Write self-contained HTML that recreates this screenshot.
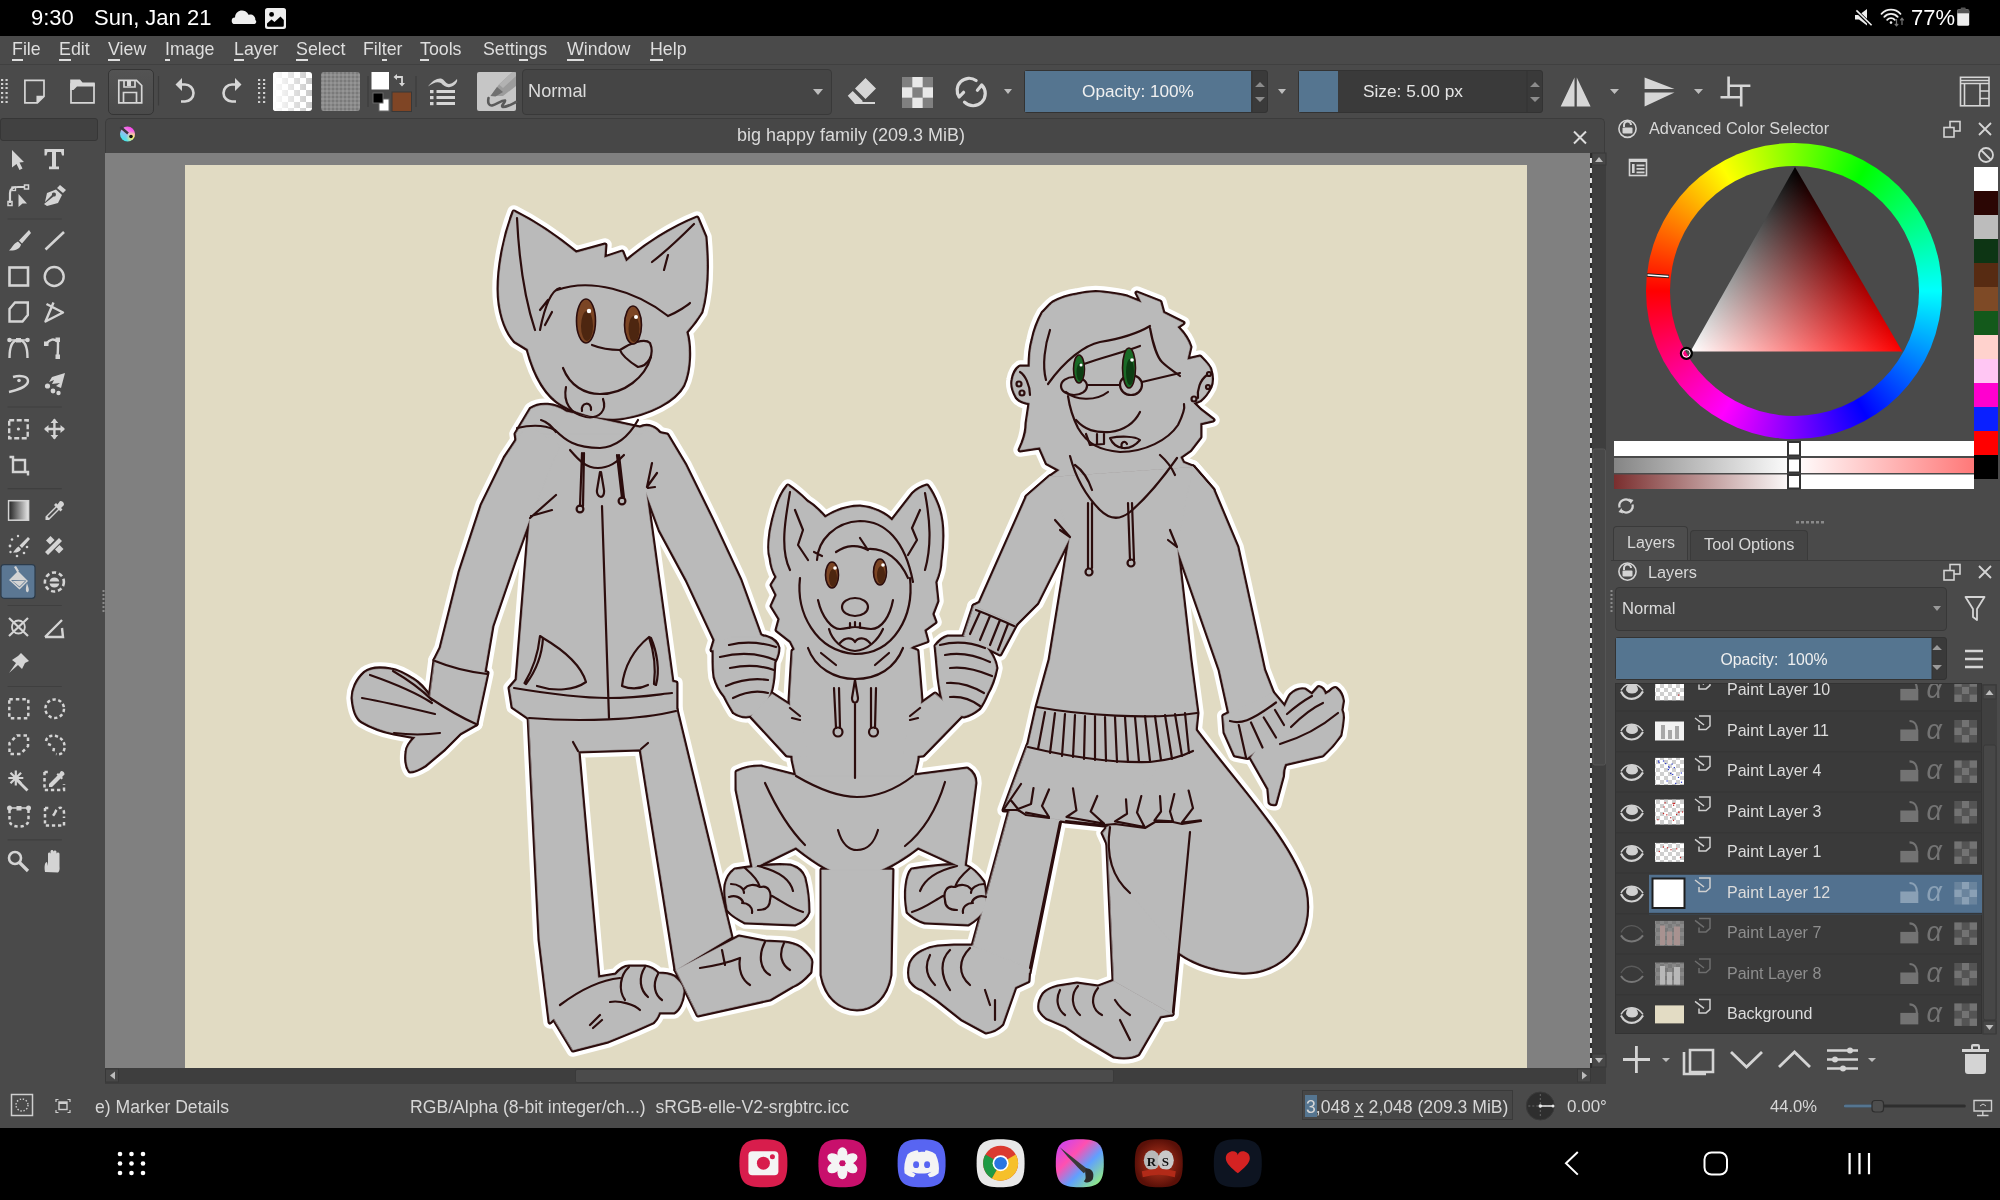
<!DOCTYPE html>
<html><head><meta charset="utf-8">
<style>
*{margin:0;padding:0;box-sizing:border-box}
html,body{width:2000px;height:1200px;overflow:hidden;background:#4a4a4a;font-family:"Liberation Sans",sans-serif;color:#d8d8d8}
.a{position:absolute}
#sb{left:0;top:0;width:2000px;height:36px;background:#000;color:#fff;font-size:22px}
#menu{left:0;top:36px;width:2000px;height:29px;background:#4a4a4a;font-size:17.8px;color:#dedede}
#menu span{position:absolute;top:3px}
#menu u{text-decoration:none;border-bottom:2px solid #dedede}
#tb{left:0;top:64px;width:2000px;height:54px;background:#4a4a4a;border-top:1px solid #404040}
#nav{left:0;top:1128px;width:2000px;height:72px;background:#000}
#status{left:0;top:1090px;width:2000px;height:38px;background:#4a4a4a;font-size:17.6px;color:#d6d6d6}
#canvasbg{left:105px;top:153px;width:1486px;height:915px;background:#808080}
#paper{left:185px;top:165px;width:1342px;height:903px;background:#e1dbc3}
#tab{left:105px;top:118px;width:1500px;height:36px;background:#474747;border:1px solid #3c3c3c;border-bottom:none;border-radius:5px 5px 0 0}
.field{background:#3d3d3d;border:1px solid #333;border-radius:4px}
.btn{background:linear-gradient(#535353,#4a4a4a);border:1px solid #353535;border-radius:5px}
.txt{white-space:nowrap}
</style></head><body>
<!-- android status bar -->
<div id="sb" class="a">
  <span class="a" style="left:31px;top:5px">9:30</span>
  <span class="a" style="left:94px;top:5px">Sun, Jan 21</span>
  <span class="a" style="left:1911px;top:5px">77%</span>
</div>
<!-- menu -->
<div id="menu" class="a">
  <span style="left:12px"><u>F</u>ile</span>
  <span style="left:59px"><u>E</u>dit</span>
  <span style="left:108px"><u>V</u>iew</span>
  <span style="left:165px"><u>I</u>mage</span>
  <span style="left:234px"><u>L</u>ayer</span>
  <span style="left:296px"><u>S</u>elect</span>
  <span style="left:363px">Fil<u>t</u>er</span>
  <span style="left:420px"><u>T</u>ools</span>
  <span style="left:483px">Setti<u>n</u>gs</span>
  <span style="left:567px"><u>W</u>indow</span>
  <span style="left:650px"><u>H</u>elp</span>
</div>
<!-- toolbar -->
<div id="tb" class="a"></div>
<div class="a btn" style="left:108px;top:69px;width:46px;height:46px"></div>
<div class="a field" style="left:522px;top:69px;width:310px;height:46px;background:#454545;border-color:#393939"></div>
<div class="a txt" style="left:528px;top:81px;font-size:18.2px;color:#dcdcdc">Normal</div>
<div class="a" style="left:1024px;top:70px;width:244px;height:43px;background:#3a3a3a;border:1px solid #333;border-radius:3px"></div>
<div class="a" style="left:1025px;top:71px;width:226px;height:41px;background:#557590"></div>
<div class="a txt" style="left:1025px;top:81px;width:226px;text-align:center;font-size:17.2px;color:#f0f0f0">Opacity: 100%</div>
<div class="a" style="left:1298px;top:70px;width:245px;height:43px;background:#3a3a3a;border:1px solid #333;border-radius:3px"></div>
<div class="a" style="left:1299px;top:71px;width:39px;height:41px;background:#557590"></div>
<div class="a txt" style="left:1363px;top:81px;font-size:17.3px;color:#e4e4e4">Size: 5.00 px</div>
<!-- left toolbox field -->
<div class="a" style="left:0;top:118px;width:98px;height:23px;background:#414141;border:1px solid #363636;border-radius:3px"></div>
<!-- canvas -->
<div id="tab" class="a"></div>
<div class="a txt" style="left:737px;top:125px;font-size:18px;color:#dadada">big happy family (209.3 MiB)</div>
<div id="canvasbg" class="a"></div>
<div id="paper" class="a"></div>
<!-- v scrollbar -->
<div class="a" style="left:1592px;top:153px;width:14px;height:915px;background:#3e3e3e"></div>
<!-- h scrollbar -->
<div class="a" style="left:105px;top:1068px;width:1501px;height:16px;background:#3e3e3e"></div>
<div class="a" style="left:575px;top:1069px;width:539px;height:14px;background:#4b4b4b;border:1px solid #3a3a3a;border-radius:2px"></div>

<!-- right panel : color selector -->
<div class="a txt" style="left:1649px;top:119px;font-size:16.3px;color:#d8d8d8">Advanced Color Selector</div>
<div class="a" style="left:1646.4px;top:143px;width:296px;height:296px;border-radius:50%;background:conic-gradient(from 270deg,#f00,#ff0,#0f0,#0ff,#00f,#f0f,#f00)"></div>
<div class="a" style="left:1669.8px;top:166.4px;width:249.2px;height:249.2px;border-radius:50%;background:#4a4a4a"></div>
<!-- tabs -->
<div class="a" style="left:1613px;top:526px;width:75px;height:35px;background:#4d4d4d;border:1px solid #3a3a3a;border-bottom:none;border-radius:4px 4px 0 0"></div>
<div class="a" style="left:1690px;top:530px;width:118px;height:31px;background:#444;border:1px solid #3a3a3a;border-bottom:none;border-radius:4px 4px 0 0"></div>
<div class="a txt" style="left:1627px;top:534px;font-size:16px;color:#d8d8d8">Layers</div>
<div class="a txt" style="left:1704px;top:535px;font-size:16.3px;color:#d8d8d8">Tool Options</div>
<div class="a" style="left:1611px;top:560px;width:389px;height:1px;background:#3a3a3a"></div>
<!-- layers docker -->
<div class="a txt" style="left:1648px;top:563px;font-size:16.3px;color:#d8d8d8">Layers</div>
<div class="a field" style="left:1615px;top:587px;width:332px;height:44px;background:#444;border-color:#383838"></div>
<div class="a txt" style="left:1622px;top:599px;font-size:16.6px;color:#dcdcdc">Normal</div>
<div class="a" style="left:1615px;top:637px;width:332px;height:43px;background:#3a3a3a;border:1px solid #333;border-radius:3px"></div>
<div class="a" style="left:1616px;top:638px;width:316px;height:41px;background:#557590"></div>
<div class="a txt" style="left:1616px;top:651px;width:316px;text-align:center;font-size:15.8px;color:#f0f0f0">Opacity:&nbsp; 100%</div>
<div class="a" style="left:1615px;top:683px;width:367px;height:351px;background:#3a3a3a;border:1px solid #333;overflow:hidden">
</div>
<div class="a" style="left:1982px;top:684px;width:15px;height:350px;background:#404040"></div>

<!-- status bar -->
<div id="status" class="a">
  <span class="a txt" style="left:95px;top:7px">e) Marker Details</span>
  <span class="a txt" style="left:410px;top:7px">RGB/Alpha (8-bit integer/ch...)&nbsp; sRGB-elle-V2-srgbtrc.icc</span>
  <div class="a" style="left:1302px;top:0px;width:211px;height:30px;border:1px solid #3a3a3a;background:#474747"></div>
  <div class="a" style="left:1305px;top:5px;width:11.6px;height:22px;background:#557590"></div>
  <span class="a txt" style="left:1306px;top:7px">3,048 x 2,048 (209.3 MiB)</span>
  <span class="a txt" style="left:1567px;top:7px;font-size:17px">0.00°</span>
  <span class="a txt" style="left:1770px;top:7px;font-size:16.6px">44.0%</span>
</div>
<div id="nav" class="a"></div>
<svg id="ov" class="a" style="left:0;top:0" width="2000" height="1200" viewBox="0 0 2000 1200">
<defs>
<clipPath id="pclip"><rect x="185" y="165" width="1342" height="903"/></clipPath>
<g id="c1">
<path d="M 514,212 C 505,235 499,265 499,289 C 499,310 505,330 515,341 L 528,349 C 534,372 545,395 563,405 C 580,415 605,420 620,418 C 650,414 675,400 683,385 C 690,370 690,345 686,332 C 695,322 701,312 701,312 C 706,295 708,270 705,237 L 697,218 C 672,228 645,245 626,262 L 622,252 L 604,258 L 605,245 L 576,253 C 560,240 540,225 514,212 Z"/>
<path d="M 531,409 C 540,403 555,404 566,412 L 640,428 C 648,424 656,428 660,434 L 662,460 L 520,460 L 516,434 Z"/>
<path d="M 540,434 L 646,434 L 646,492 L 672,682 L 676,683 L 676,711 C 650,718 600,722 529,718 L 513,707 L 510,688 L 517,680 L 530,518 Z"/>
<path d="M 527,425 L 560,445 L 530,518 L 514,562 L 492,626 L 484,673 L 435,660 L 441,648 L 460,572 L 482,505 L 505,458 Z"/>
<path d="M 435,660 L 487,673 L 476,724 L 430,698 Z"/>
<path d="M 430,698 C 425,690 418,683 413,680 C 405,675 398,671 391,670 C 380,668 370,669 365,673 C 357,680 353,690 353,698 C 354,710 357,718 362,721 C 372,727 384,731 394,733 L 416,737 C 411,742 407,747 407,752 C 406,760 407,767 410,771 C 415,771 420,768 425,765 L 444,749 L 460,733 L 476,724 Z"/>
<path d="M 529,716 L 676,709 L 731,937 L 676,970 L 641,749 L 578,751 L 598,978 L 550,1022 L 540,940 Z"/>
<path d="M 550,1012 L 576,986 L 598,978 L 616,975 C 620,970 625,967 629,967 L 645,967 C 652,968 656,972 658,974 C 665,974 670,975 674,977 C 682,983 684,990 683,993 C 682,1002 678,1010 674,1012 L 659,1012 C 657,1018 655,1020 653,1022 L 635,1030 L 608,1041 L 573,1050 Z"/>
<path d="M 676,970 L 739,937 L 765,942 L 784,943 C 792,944 797,946 800,948 C 806,953 811,958 811,962 L 810,972 C 803,980 797,984 792,986 L 770,999 L 698,1015 Z"/>
<path d="M 642,430 L 667,435 L 685,465 L 712,520 L 740,580 L 760,635 L 775,645 L 712,650 L 715,640 L 687,580 L 660,530 L 646,492 Z"/>
<path d="M 714,650 C 716,644 722,639 731,637 L 765,637 C 772,639 777,643 778,648 C 778,655 775,660 774,662 L 773,678 C 772,686 771,690 770,693 C 767,700 765,705 762,708 C 756,713 751,716 746,716 C 741,716 737,714 734,712 C 730,706 727,700 725,696 C 720,690 717,684 715,677 C 714,670 714,665 714,662 Z"/>
</g>
<g id="c2">
<path d="M 788,486 C 780,495 775,510 771,531 C 769,545 769,552 771,558 C 772,567 774,572 777,577 L 772,585 L 777,595 L 772,606 L 780,619 L 777,630 L 791,641 L 796,651 C 822,668 885,668 913,646 L 927,641 L 924,630 L 935,622 L 932,614 L 937,601 L 935,582 C 938,575 940,568 940,561 C 943,540 943,520 937,505 C 934,497 930,490 927,486 C 920,488 916,491 913,494 L 892,521 C 885,514 873,508 860,507 C 848,507 836,511 825,518 C 818,510 812,505 807,502 C 800,495 794,490 788,486 Z"/>
<path d="M 793,651 C 800,645 808,643 812,643 L 901,646 C 906,647 913,649 917,651 L 921,700 L 917,760 L 913,778 L 797,778 L 793,760 L 790,700 Z"/>
<path d="M 772,694 L 800,712 L 808,757 L 787,755 L 751,716 Z"/>
<path d="M 935,694 L 910,712 L 903,757 L 923,755 L 961,716 Z"/>
<path d="M 737,772 C 745,768 752,767 761,767 L 796,776 L 913,776 L 967,769 C 972,772 975,777 975,783 L 964,868 L 918,847 C 895,865 870,877 855,876 C 835,876 815,862 796,847 L 753,868 L 737,790 Z"/>
<path d="M 735,870 C 760,866 780,865 790,866 C 797,868 802,872 804,878 C 807,890 808,900 808,912 C 806,918 800,922 795,924 L 745,922 C 738,918 732,915 728,910 C 726,900 725,892 726,885 C 728,876 732,872 735,870 Z"/>
<path d="M 912,870 C 935,866 955,865 965,866 C 973,869 978,875 983,882 C 985,890 986,900 985,908 C 980,916 975,920 968,924 L 925,922 C 918,920 912,916 908,912 C 906,900 906,892 907,885 C 908,877 910,872 912,870 Z"/>
<path d="M 822,870 L 892,870 L 890,975 C 886,998 872,1009 857,1009 C 840,1009 826,997 822,975 Z"/>
</g>
<g id="c3">
<path d="M 1043,313 C 1048,308 1050,305 1053,303 C 1062,298 1070,296 1077,295 C 1085,293 1095,292 1103,293 C 1112,294 1120,295 1127,297 L 1142,303 L 1137,293 L 1160,302 L 1163,313 L 1183,323 L 1177,327 C 1183,333 1188,340 1190,347 L 1187,360 L 1200,357 C 1205,362 1210,367 1210,370 C 1212,376 1212,382 1210,387 C 1207,393 1204,397 1200,400 L 1193,403 L 1200,410 L 1213,420 L 1200,423 L 1200,437 L 1190,450 L 1180,457 L 1183,463 L 1193,467 L 1050,477 L 1060,470 L 1047,463 L 1040,447 L 1020,450 L 1023,443 C 1026,435 1027,430 1027,423 L 1030,403 C 1024,402 1019,400 1017,397 C 1013,390 1012,385 1013,380 C 1014,374 1017,369 1020,367 L 1030,367 C 1030,355 1031,347 1033,340 C 1035,330 1039,320 1043,313 Z"/>
<path d="M 1050,477 L 1193,467 L 1213,490 L 1177,547 L 1190,660 L 1197,713 L 1193,752 L 1028,747 L 1037,707 L 1050,660 L 1070,537 L 1027,497 Z"/>
<path d="M 1193,467 L 1213,490 L 1237,547 L 1263.75,670 L 1272.5,692.5 L 1231,720 L 1220,670 L 1177,547 Z"/>
<path d="M 1223.75,716 L 1272.5,692.5 L 1285,707.5 L 1286,727.5 L 1247.5,757.5 L 1235,755 L 1225,732.5 Z"/>
<path d="M 1285,707 C 1288,700 1290,696 1291,695 C 1295,691 1300,689 1305,690 L 1312,695 L 1318.75,687.5 C 1322,688 1324,691 1325,695 L 1330,692 C 1333,689 1335,688 1336,688.75 C 1340,692 1342,697 1342.5,701 L 1341,710 C 1342,712 1342.5,715 1342.5,717.5 C 1342,725 1341,730 1340,735 C 1333,745 1328,750 1322.5,755 L 1285,763.75 C 1283,768 1282.5,772 1282.5,776 L 1275,803.75 C 1273,804 1271,803.5 1270,802.5 L 1268.75,788.75 L 1251,757.5 Z"/>
<path d="M 1050,477 L 1070,537 L 1037,603 L 1016,624 L 974,606 L 980,603 L 1027,497 Z"/>
<path d="M 974,606 L 1016,624 L 1000,654 L 964,636 Z"/>
<path d="M 936,646 C 940,641 944,638 948,637 L 976,637 C 980,639 983,642 985,646 C 990,652 995,660 996,668 C 994,678 990,688 987,693 C 984,700 982,704 979,708 C 973,713 968,715 964,716 C 955,715 949,712 945,708 C 942,698 940,688 939,678 C 938,668 937,655 936,646 Z"/>
<path d="M 1028,745 L 1193,750 L 1201,821 L 1182,824 L 1173,822 L 1155,822 L 1145,828 L 1115,824 L 1104,825 L 1066,821 L 1049,818 L 1026,815 L 1018,810 L 1004,810 Z"/>
<path d="M 1010,810 L 1060,820 L 1029,973 L 973,946 Z"/>
<path d="M 1107,827 L 1190,830 L 1172,1014 L 1114,981 Z"/>
<path d="M 1193,727 C 1240,790 1290,840 1305,890 C 1315,940 1280,975 1240,972 C 1210,970 1190,960 1180,953 L 1130,893 L 1103,833 Z"/>
<path d="M 973,946 L 954,946 L 938,947 C 930,948 926,950 922,952 C 916,955 913,959 911,963 C 909,970 909,976 911,981 C 914,985 918,988 922,989 L 938,1000 L 962,1019 L 986,1032 C 993,1031 998,1028 1002,1024 L 1015,987 L 1028,981 L 1029,968 Z"/>
<path d="M 1114,981 L 1098,987 L 1077,984 L 1058,987 C 1050,989 1047,991 1044,994 C 1040,1000 1039,1005 1040,1010 C 1043,1015 1046,1018 1050,1019 L 1066,1026 L 1082,1037 L 1114,1056 C 1125,1058 1132,1057 1138,1054 L 1160,1016 L 1172,1014 Z"/>
</g>
</defs>
<g clip-path="url(#pclip)" stroke-linejoin="round" stroke-linecap="round">
<use href="#c1" fill="#fff" stroke="#fff" stroke-width="13.5"/>
<use href="#c2" fill="#fff" stroke="#fff" stroke-width="13.5"/>
<use href="#c3" fill="#fff" stroke="#fff" stroke-width="13.5"/>
<use href="#c1" fill="#2c0d0d" stroke="#2c0d0d" stroke-width="5"/>
<use href="#c2" fill="#2c0d0d" stroke="#2c0d0d" stroke-width="5"/>
<use href="#c3" fill="#2c0d0d" stroke="#2c0d0d" stroke-width="5"/>
<use href="#c1" fill="#bababa" stroke="#bababa" stroke-width="0.6"/>
<use href="#c2" fill="#bababa" stroke="#bababa" stroke-width="0.6"/>
<use href="#c3" fill="#bababa" stroke="#bababa" stroke-width="0.6"/>
<g fill="none" stroke="#2c0d0d" stroke-width="2.2" stroke-linecap="round" stroke-linejoin="round">
<!-- father -->
<path d="M 517,218 C 519,260 525,300 535,330"/>
<path d="M 694,224 C 680,238 665,252 652,262 M 668,255 L 664,270"/>
<path d="M 557,290 C 590,278 635,290 668,316 M 668,316 C 678,312 688,305 690,303 M 540,330 C 545,305 552,290 560,288 M 548,300 L 540,310 M 552,312 L 545,325"/>
<path d="M 592,345 C 602,349 612,350 620,350"/>
<path d="M 620,350 C 630,343 645,338 650,343 C 655,355 648,366 638,367 C 630,362 622,356 620,350 Z"/>
<path d="M 563,368 C 570,386 585,394 600,394 C 625,394 645,377 651,357"/>
<path d="M 566,387 C 563,402 570,414 586,417 C 600,419 607,410 603,399"/>
<path d="M 582,411 C 580,402 592,401 591,410"/>
<path d="M 517,428 C 530,425 545,425 555,430 C 565,440 575,448 600,448 C 615,447 628,438 638,420"/>
<path d="M 541,420 C 548,422 552,427 556,432 M 570,450 C 577,458 585,468 598,468 C 608,468 618,462 624,455"/>
<path d="M 582,453 L 580,506 M 584,453 L 583,506 M 617,455 L 622,498 M 619,455 L 624,498"/>
<circle cx="580" cy="509" r="3.4"/><circle cx="622" cy="501" r="3.4"/>
<path d="M 600,472 L 597,490 C 596,498 605,500 604,490 L 601,472 M 602,506 L 609,718"/>
<path d="M 530,518 L 556,495 M 531,516 L 552,510 M 647,487 L 652,463 M 647,487 L 657,473 M 648,488 L 655,487"/>
<path d="M 540,636 L 543,638 C 542,655 535,672 526,684 L 524.5,683 C 532,671 538,655 540,636 Z M 543,638 C 560,648 580,662 586,682 C 575,690 555,692 537,686"/>
<path d="M 649,637 L 651,638 C 657,652 660,670 656,685 L 654,684 C 656,668 654,652 649,637 Z M 649,637 C 638,646 625,660 622,686 C 632,690 640,689 648,685"/>
<path d="M 514,688 C 550,694 580,698 608,698 C 640,698 660,694 672,693 M 529,718 C 580,722 640,720 676,711"/>
<path d="M 578,751 L 573,742 M 641,749 L 648,743"/>
<path d="M 435,661 C 452,668 470,672 487,674 M 430,698 C 445,708 460,717 476,724"/>
<path d="M 393,671 C 405,678 420,688 432,700 M 370,675 C 390,682 412,690 432,703 M 362,698 C 385,702 410,708 435,714 M 394,733 C 410,735 425,735 440,733"/>
<path d="M 729,645 C 745,641 760,642 776,647 M 720,657 C 740,652 758,653 775,660 M 730,668 C 745,665 760,665 774,670 M 726,686 C 740,680 755,678 768,680 M 733,698 C 745,692 757,690 768,693"/>
<path d="M 560,1005 C 580,990 600,980 620,978 M 590,1025 L 600,1015 M 593,1028 L 602,1020"/>
<path d="M 629,967 C 620,975 618,990 625,1000 M 645,967 C 638,978 640,990 648,997 M 658,974 C 652,985 655,995 662,1000 M 610,1002 C 620,1000 635,1005 640,1010"/>
<path d="M 722,950 L 725,965 M 700,968 C 720,965 730,962 740,958 M 740,958 C 738,970 742,980 750,985 M 765,942 C 758,955 760,970 770,975 M 784,943 C 778,955 782,965 790,970"/>
<!-- child -->
<path d="M 790,492 C 785,520 780,550 790,570 M 795,510 L 803,530 L 798,545 L 808,560 M 925,493 C 930,520 932,545 925,570 M 920,510 L 912,528 L 917,540 L 908,555"/>
<path d="M 817,560 C 818,540 835,522 860,521 C 885,521 905,540 913,582 M 836,552 C 846,545 858,544 868,550 L 860,538 M 868,549 C 886,548 900,560 908,578 M 822,556 L 814,552"/>
<path d="M 800,578 C 796,612 815,651 855,654 C 895,654 914,615 910,578"/>
<ellipse cx="855" cy="607" rx="13" ry="9"/>
<path d="M 818,600 C 822,618 832,629 840,629 C 846,629 850,627 855,627 C 860,627 865,629 871,629 C 882,629 890,616 893,600 M 829,629 C 832,640 842,650 855,651 C 868,650 878,640 883,629 M 850,623 L 850,628 M 855,622 L 855,627 M 860,623 L 860,628 M 840,643 C 845,637 852,637 855,642 C 858,637 865,637 870,643"/>
<path d="M 808,648 C 815,668 835,679 855,679 C 878,679 895,668 903,648 M 821,653 L 836,665 M 889,653 L 875,665 M 834,688 L 836,728 M 839,688 L 840,728 M 871,688 L 871,728 M 876,688 L 875,728"/>
<circle cx="838" cy="732" r="4.5"/><circle cx="873.5" cy="732" r="4.5"/>
<path d="M 855,680 L 852,698 C 852,704 858,704 858,698 L 855,680 M 855,704 L 855,778 M 790,708 L 800,716 M 792,718 L 800,720 M 920,708 L 910,716 M 918,718 L 910,720"/>
<path d="M 796,776 C 820,790 840,797 857,797 C 875,797 895,790 913,776"/>
<path d="M 765,783 C 775,805 790,830 805,845 M 945,782 C 938,805 925,830 905,846 M 838,830 C 842,845 850,850 857,850 C 870,850 875,840 878,830"/>
<path d="M 745,868 C 752,874 758,880 760,887 C 755,884 748,884 744,889 M 731,884 C 738,884 744,888 744,893 M 729,897 C 735,895 741,897 743,902 M 742,903 C 748,903 753,907 752,913 M 761,887 C 768,885 772,892 770,900 C 770,907 765,910 758,910 M 772,896 C 780,900 790,908 803,912 M 758,866 C 775,870 790,878 793,891"/>
<path d="M 970,868 C 963,874 957,880 955,887 C 960,884 967,884 971,889 M 984,884 C 977,884 971,888 971,893 M 986,897 C 980,895 974,897 972,902 M 973,903 C 967,903 962,907 963,913 M 954,887 C 947,885 943,892 945,900 C 945,907 950,910 957,910 M 943,896 C 935,900 925,908 912,912 M 957,866 C 940,870 925,878 920,891"/>
<!-- mother -->
<path d="M 1048,384 C 1065,360 1085,345 1100,342 C 1125,338 1140,332 1150,326 M 1084,364 C 1100,358 1125,352 1140,346 M 1150,328 C 1153,345 1158,358 1162,362 C 1168,368 1175,372 1180,376 M 1050,330 C 1045,345 1042,365 1046,380"/>
<ellipse cx="1074" cy="386" rx="13" ry="9"/><ellipse cx="1131" cy="385" rx="11" ry="10"/>
<path d="M 1087,385 L 1120,385 M 1142,382 L 1180,373"/>
<path d="M 1066,392 C 1075,400 1095,402 1108,392"/>
<path d="M 1068,396 C 1070,410 1074,420 1078,428 C 1088,445 1100,450 1120,452 C 1145,452 1168,440 1178,425 C 1183,415 1185,408 1184,404"/>
<path d="M 1076,420 C 1085,430 1095,433 1110,432 C 1125,430 1135,422 1140,412 M 1086,434 L 1090,445 L 1104,444 L 1104,434 M 1097,434 L 1097,444"/>
<path d="M 1110,438 C 1115,450 1130,452 1140,440 C 1135,436 1120,436 1110,438 Z M 1122,448 C 1120,442 1125,440 1127,444"/>
<path d="M 1020,372 C 1025,375 1030,385 1030,395 M 1207,375 C 1200,380 1197,390 1198,398"/>
<circle cx="1019" cy="384" r="2.5"/><circle cx="1022" cy="393" r="2.5"/><circle cx="1209" cy="374" r="2"/><circle cx="1208" cy="387" r="2"/><circle cx="1194" cy="399" r="2.5"/>
<path d="M 1070,456 C 1075,475 1085,495 1100,510 C 1110,520 1120,520 1130,512 C 1150,495 1165,475 1177,458 M 1075,465 C 1082,470 1088,478 1092,490 M 1160,455 C 1168,462 1172,468 1175,475"/>
<path d="M 1088,503 L 1088,568 M 1092,503 L 1092,568 M 1128,503 L 1130,560 M 1132,503 L 1134,560"/>
<circle cx="1089" cy="572" r="3.5"/><circle cx="1131" cy="563" r="3.5"/>
<path d="M 1070,537 L 1055,520 M 1070,537 L 1060,530 M 1177,547 L 1170,530 M 1177,547 L 1168,540"/>
<path d="M 1037,707 C 1080,715 1150,720 1197,713 M 1028,747 C 1070,757 1110,763 1150,762 C 1170,760 1185,755 1193,751"/>
<path d="M 1045,712 L 1038,749 M 1055,713 L 1050,753 M 1065,714 L 1062,756 M 1075,715 L 1073,757 M 1085,716 L 1084,759 M 1095,716 L 1095,760 M 1105,717 L 1106,761 M 1115,717 L 1117,762 M 1125,717 L 1128,762 M 1135,717 L 1139,762 M 1145,716 L 1150,761 M 1155,716 L 1161,760 M 1165,715 L 1172,759 M 1175,714 L 1182,756 M 1185,713 L 1189,753"/>
<path d="M 1004,810 L 1018,810 C 1022,812 1024,814 1026,815 L 1049,818 M 1066,821 L 1104,825 L 1115,824 L 1145,828 L 1155,822 L 1173,822 L 1182,824 L 1201,821"/>
<path d="M 1004,809 L 1021,784 M 1011.5,801 L 1018,809 L 1031,804 L 1033.5,788 M 1026,812.6 L 1049,817 L 1042,806 L 1049,789.5 M 1073,788.4 L 1076.4,810.4 L 1066.5,817 L 1104,823.6 L 1090.7,811.5 L 1097.3,796 M 1126,799.4 L 1127,813.7 L 1115,821.4 L 1144.6,827 L 1137,812.6 L 1141.3,796 M 1160,796 L 1161,811.5 L 1154.5,820.3 L 1173,821.4 L 1170,811.5 L 1174.3,794 M 1188.6,790.6 L 1193,808.2 L 1182,822.5 L 1200.7,820.3"/>
<path d="M 1110,827 C 1105,860 1115,880 1130,893 M 1190,832 L 1173,1012 M 1060,822 L 1030,968"/>
<path d="M 1230,721 C 1240,724 1250,722 1276,702.5 M 1238.75,725 L 1246,757.5 M 1251,722.5 L 1262.5,747.5 M 1263.75,717.5 L 1276,737.5 M 1275,710 L 1284,725"/>
<path d="M 976,610 C 990,615 1000,620 1014,626 M 980,612 L 970,634 M 990,616 L 980,640 M 1000,620 L 990,645 M 1008,624 L 998,650"/>
<path d="M 940,645 C 955,641 970,642 985,648 M 945,655 C 960,652 975,655 990,662 M 950,668 C 965,666 978,670 992,676 M 947,683 C 960,682 972,686 984,693 M 950,697 C 962,696 972,700 980,706"/>
<path d="M 1291,727 C 1300,718 1312,708 1323,703 M 1280,744 C 1300,738 1320,728 1338,713 M 1287,714 C 1295,707 1303,701 1312,696"/>
<path d="M 930,955 C 925,965 925,975 935,985 M 950,950 C 940,960 940,975 950,990 M 970,948 C 958,960 958,975 970,985 M 985,990 L 990,1005 M 995,1000 L 995,1020"/>
<path d="M 1060,990 C 1055,1000 1058,1010 1065,1015 M 1078,986 C 1070,995 1072,1008 1080,1015 M 1098,988 C 1090,998 1092,1010 1102,1015 M 1120,1020 L 1130,1040 M 1115,1000 C 1120,1008 1125,1012 1130,1015"/>
</g>
<g stroke="#2c0d0d" stroke-width="1.6">
<ellipse cx="586" cy="321" rx="9.5" ry="22" fill="#7b4524"/><ellipse cx="587" cy="326" rx="6" ry="15" fill="#4d2610" stroke="none"/>
<ellipse cx="633" cy="325" rx="8.5" ry="19" fill="#7b4524"/><ellipse cx="634" cy="329" rx="5.5" ry="13" fill="#4d2610" stroke="none"/>
<ellipse cx="832" cy="575" rx="6.5" ry="13" fill="#7b4524"/><ellipse cx="833" cy="578" rx="4" ry="9" fill="#4d2610" stroke="none"/>
<ellipse cx="880" cy="572" rx="6.5" ry="13" fill="#7b4524"/><ellipse cx="881" cy="575" rx="4" ry="9" fill="#4d2610" stroke="none"/>
<ellipse cx="1079" cy="369" rx="5.5" ry="14" fill="#1a6a26"/><ellipse cx="1080" cy="372" rx="3.5" ry="9" fill="#0c3d12" stroke="none"/>
<ellipse cx="1129" cy="368" rx="6.5" ry="20" fill="#1a6a26"/><ellipse cx="1130" cy="372" rx="4" ry="13" fill="#0c3d12" stroke="none"/>
</g>
<g fill="#fff"><circle cx="589" cy="311" r="2.2"/><circle cx="636" cy="317" r="2"/><circle cx="835" cy="568" r="1.8"/><circle cx="883" cy="565" r="1.8"/><circle cx="1081" cy="365" r="1.5"/><circle cx="1132" cy="360" r="1.8"/></g>

</g>

<!-- status bar icons -->
<g fill="#eee">
<path d="M 234.8,24 A 3.2,3.2 0 0 1 235,17.6 A 7,7 0 0 1 248.5,14.8 A 5,5 0 0 1 255.3,20 A 2.2,2.2 0 0 1 254.3,24 Z"/>
<path d="M 267.5,8 H 283.5 Q 286,8 286,10.5 V 26.5 Q 286,29 283.5,29 H 267.5 Q 265,29 265,26.5 V 10.5 Q 265,8 267.5,8 Z"/>
</g>
<g fill="#000"><circle cx="271.6" cy="14.4" r="2.4"/><path d="M 267,23.5 L 271.5,19.5 L 274.5,22 L 280.5,16.5 L 283.8,20 L 283.8,25.5 Q 283.8,26.8 282.5,26.8 L 268.3,26.8 Q 267,26.8 267,25.5 Z"/></g>
<g fill="#eee">
<path d="M 1855,15 H 1859 L 1867,9 V 25.5 L 1859,19.5 H 1855 Z"/>
</g>
<path d="M 1855.5,10 L 1871.5,25.5" stroke="#000" stroke-width="3.5"/>
<path d="M 1856.4,10.4 L 1871.6,25.2" stroke="#eee" stroke-width="1.6"/>
<g fill="none" stroke="#eee" stroke-width="1.8" stroke-linecap="round">
<path d="M 1881.5,13.8 A 13,13 0 0 1 1900.5,13.8"/>
<path d="M 1884.3,16.8 A 9,9 0 0 1 1897.7,16.8"/>
<path d="M 1887.2,19.8 A 5,5 0 0 1 1894.8,19.8"/>
</g>
<circle cx="1891" cy="22.6" r="1.3" fill="#eee"/>
<path d="M 1896.5,19 V 25.5 M 1894.8,23.8 L 1896.5,25.8 L 1898.2,23.8 M 1902,25 V 18.5 M 1900.3,20.3 L 1902,18.3 L 1903.7,20.3" stroke="#777" stroke-width="1.2" fill="none"/>
<rect x="1957.2" y="9.5" width="12" height="16.2" rx="1.5" fill="#eee"/>
<rect x="1957.2" y="9.5" width="12" height="3.8" fill="#555"/>
<rect x="1960.7" y="7.6" width="5" height="2.5" rx="0.8" fill="#555"/>

<!-- toolbar -->
<g fill="#cfcfcf">
<rect x="1" y="79" width="2.2" height="2" /><rect x="1" y="83" width="2.2" height="2"/><rect x="1" y="87" width="2.2" height="2"/><rect x="1" y="92" width="2.2" height="2"/><rect x="1" y="96.5" width="2.2" height="2"/><rect x="1" y="101" width="2.2" height="2"/>
<rect x="5.5" y="79" width="2.2" height="2" /><rect x="5.5" y="83" width="2.2" height="2"/><rect x="5.5" y="87" width="2.2" height="2"/><rect x="5.5" y="92" width="2.2" height="2"/><rect x="5.5" y="96.5" width="2.2" height="2"/><rect x="5.5" y="101" width="2.2" height="2"/>
<rect x="258" y="79" width="2.2" height="2" /><rect x="258" y="83" width="2.2" height="2"/><rect x="258" y="87" width="2.2" height="2"/><rect x="258" y="92" width="2.2" height="2"/><rect x="258" y="96.5" width="2.2" height="2"/><rect x="258" y="101" width="2.2" height="2"/>
<rect x="263" y="79" width="2.2" height="2" /><rect x="263" y="83" width="2.2" height="2"/><rect x="263" y="87" width="2.2" height="2"/><rect x="263" y="92" width="2.2" height="2"/><rect x="263" y="96.5" width="2.2" height="2"/><rect x="263" y="101" width="2.2" height="2"/>
</g>
<g fill="none" stroke="#d6d6d6" stroke-width="1.7">
<path d="M 24.9,80.3 H 44 V 96.5 L 37.3,102.8 H 24.9 Z"/>
<path d="M 44,96.5 H 37.3 V 102.8" fill="#d6d6d6"/>
<path d="M 71,84 H 94 V 102.8 H 71 Z"/>
<path d="M 118.8,80.3 H 136.5 L 141.7,85.5 V 102.8 H 118.8 Z M 124,80.3 V 87 H 135 V 80.3 M 123.5,102.8 V 92.5 H 136.5 V 102.8"/>
</g>
<path d="M 70.2,79.5 H 80 L 82.5,82.5 H 94.7 V 86.5 H 77 L 73.5,90 H 70.2 Z" fill="#d6d6d6"/>
<rect x="127" y="81" width="4" height="5" fill="#d6d6d6"/>
<path d="M 158.5,76 V 105.5" stroke="#3c3c3c" stroke-width="1.2"/>
<g fill="none" stroke="#d6d6d6" stroke-width="2.6">
<path d="M 180,84.5 H 185 A 8.5,8.5 0 0 1 185,101.5 H 181"/>
<path d="M 237,84.5 H 232 A 8.5,8.5 0 0 0 232,101.5 H 236"/>
</g>
<path d="M 175.5,84.5 L 182,78 V 91 Z M 241.5,84.5 L 235,78 V 91 Z" fill="#d6d6d6"/>
<!-- gradient / pattern / colors -->
<defs>
<pattern id="chk" width="12" height="12" patternUnits="userSpaceOnUse"><rect width="12" height="12" fill="#fff"/><rect width="6" height="6" fill="#c8c8c8"/><rect x="6" y="6" width="6" height="6" fill="#c8c8c8"/></pattern>
<linearGradient id="gwh" x1="0" x2="1"><stop offset="0" stop-color="#fff" stop-opacity="1"/><stop offset="1" stop-color="#fff" stop-opacity="0"/></linearGradient>
<pattern id="noise" width="4" height="4" patternUnits="userSpaceOnUse"><rect width="4" height="4" fill="#8a8a8a"/><rect width="2" height="2" fill="#7a7a7a"/><rect x="2" y="2" width="2" height="2" fill="#959595"/></pattern>
<linearGradient id="pen" x1="0" y1="0" x2="1" y2="1"><stop offset="0" stop-color="#d8d8d8"/><stop offset="1" stop-color="#bdbdbd"/></linearGradient>
</defs>
<rect x="273" y="72" width="39" height="39" rx="3" fill="url(#chk)"/>
<rect x="273" y="72" width="39" height="39" rx="3" fill="url(#gwh)"/>
<rect x="321" y="72" width="39" height="39" rx="3" fill="url(#noise)"/>
<path d="M 368,76 V 107 M 416,76 V 107" stroke="#3c3c3c" stroke-width="1.2"/>
<rect x="371.5" y="72" width="17.5" height="17.5" fill="#fff"/>
<rect x="392" y="92" width="19.5" height="19.5" fill="#7f4525" stroke="#383838" stroke-width="1"/>
<rect x="379" y="99" width="10" height="12" fill="#fff" stroke="#6a6a6a" stroke-width="1"/>
<rect x="373" y="93" width="10" height="10" fill="#000" stroke="#6a6a6a" stroke-width="1"/>
<path d="M 395,77 H 402 V 83.5" fill="none" stroke="#d6d6d6" stroke-width="1.8"/>
<path d="M 393.5,77 L 397,74 V 80 Z M 402,86.5 L 399,83 H 405 Z" fill="#d6d6d6"/>
<!-- tool options icon -->
<path d="M 428,86.5 C 432,81 437,78 441,78.5 C 444,79 446,84 449,84 C 452,84 455,81 457,79 C 458,82 455,86 450,87 C 446,88 443,85 441,83 C 437,81 433,83 428,86.5 Z" fill="#d0d0d0"/>
<g fill="#d6d6d6"><rect x="430" y="90" width="3.5" height="3.2"/><rect x="436.5" y="90" width="18.5" height="3"/><rect x="430" y="96" width="3.5" height="3.2"/><rect x="436.5" y="96" width="18.5" height="3"/><rect x="430" y="102" width="3.5" height="3.2"/><rect x="436.5" y="102" width="18.5" height="3"/></g>
<!-- brush preset -->
<rect x="477" y="72" width="39" height="39" rx="2" fill="#c6c6c6"/>
<path d="M 488.5,98 C 487.5,103 489,106 492,105.5 C 497,104 502,100 505,100.5 C 506,102 500,106 503,107 C 507,107 512,104 516,102" fill="none" stroke="#5a5a5a" stroke-width="2.6" stroke-linecap="round"/>
<path d="M 490.5,96 L 499,84.5 L 512,72.5 H 516 V 86 L 503,96 Z" fill="#9c9c9c"/>
<path d="M 490.5,96 L 497,87 L 503,92 L 495.5,96.5 Z" fill="#707070"/>
<path d="M 499,84.5 L 512,72.5 H 516 V 76 L 503,88 Z" fill="#b2b2b2"/>
<!-- blend combobox arrow -->
<path d="M 813,89 L 823,89 L 818,95 Z" fill="#bdbdbd"/>
<!-- eraser -->
<path d="M 865.5,78 L 876,88.5 L 865.5,99 L 855,88.5 Z M 852.75,91 L 862.5,100.8 L 862.5,102 H 875 V 104 H 855 L 847.75,95.75 Z" fill="#d6d6d6"/>
<!-- alpha checker -->
<rect x="902" y="77" width="31" height="31" fill="#808080"/>
<g fill="#e8e8e8"><rect x="912.33" y="77" width="10.33" height="10.33"/><rect x="902" y="87.33" width="10.33" height="10.33"/><rect x="922.67" y="87.33" width="10.33" height="10.33"/><rect x="912.33" y="97.67" width="10.33" height="10.33"/></g>
<!-- refresh -->
<g fill="none" stroke="#d8d8d8" stroke-width="3.2" stroke-linecap="round" stroke-linejoin="round">
<path d="M 976.1,80.5 A 12,12 0 0 0 959.2,97 L 963.6,92.3"/>
<path d="M 964.5,102.2 A 12,12 0 0 0 981.7,85 L 977.4,90.2"/>
</g>
<path d="M 1004,89 L 1012,89 L 1008,94 Z M 1278,89 L 1286,89 L 1282,94 Z M 1610,89 L 1619,89 L 1614.5,94 Z M 1694,89 L 1703,89 L 1698.5,94 Z" fill="#bdbdbd"/>
<!-- spin arrows -->
<path d="M 1252,71 V 112 M 1527,71 V 112" stroke="#333" stroke-width="1"/>
<path d="M 1255,87 L 1265,87 L 1260,82 Z M 1255,97 L 1265,97 L 1260,102 Z M 1530,87 L 1540,87 L 1535,82 Z M 1530,97 L 1540,97 L 1535,102 Z" fill="#8c8c8c"/>
<!-- mirror -->
<path d="M 1560.7,106.4 L 1574.5,77.6 V 106.4 Z M 1576.8,77.6 L 1590.6,106.4 H 1576.8 Z" fill="#d6d6d6"/>
<path d="M 1644.6,77.6 L 1674.5,89.1 H 1644.6 Z M 1644.6,92.6 H 1674.5 L 1644.6,106.4 Z" fill="#d6d6d6"/>
<path d="M 1728.6,76.5 V 97.2 H 1742 M 1720.5,97.2 H 1728.6 M 1741.2,106.4 V 85.7 H 1728.6 M 1741.2,85.7 H 1750.4" fill="none" stroke="#d6d6d6" stroke-width="2.6"/>
<g fill="none" stroke="#d6d6d6" stroke-width="1.6">
<rect x="1960.5" y="77.3" width="28.5" height="28.5"/>
<path d="M 1960.5,80.5 H 1989 M 1960.5,83.5 H 1989 M 1964.5,83.5 V 105.8 M 1980,83.5 V 105.8 M 1980,91 H 1989 M 1980,98.5 H 1989"/>
</g>

<g fill="#d4d4d4" stroke="none">
<path d="M 12,150 L 24,162 L 19.5,162.5 L 22.5,168.5 L 19.5,170 L 16.5,164 L 12,167.5 Z"/>
<path d="M 44.5,149 H 64 V 155.5 H 62 L 61,152 H 56 V 166.5 H 59 V 169.3 H 49 V 166.5 H 52 V 152 H 47.5 L 46.5,155.5 H 44.5 Z"/>
<path d="M 18.5,194 L 27,203.5 L 22.5,203.5 L 18.5,207 Z"/>
<path d="M 60,185 L 66,190 L 63,193 L 57,188 Z M 56,189.5 L 62,195 L 58,203 L 47,206 L 44,204 L 53.5,196.5 A 2,2 0 1 0 52,195 L 45,202 L 47,193 Z"/>
<path d="M 29,230 L 31,233 L 22,243.5 L 19,240.5 Z M 18,241.5 L 21,244.5 C 20,249 15,251 9,250.5 C 12,248 13,244 18,241.5 Z"/>

</g>
<g fill="none" stroke="#d4d4d4" stroke-width="2.2">
<path d="M 10,203 V 193 C 10,189 13,187 18,187 H 24"/>
<rect x="8" y="201.5" width="4" height="4" stroke-width="1.5"/><rect x="24.5" y="185" width="4" height="4" stroke-width="1.5"/><rect x="12" y="187" width="3.5" height="3.5" stroke-width="1.3"/>
<path d="M 45.5,249.5 L 64,232" stroke-width="2.6"/>
<rect x="9.5" y="267.5" width="18.5" height="18" stroke-width="2.6"/>
<circle cx="54.2" cy="276.5" r="9.5" stroke-width="2.4"/>
<path d="M 15,302.5 H 27.8 V 315 L 22.5,321.5 H 9.5 V 309 Z" stroke-width="2.4"/>
<path d="M 9.5,358 C 9.5,345 13,340 18.5,340 C 24,340 27.5,345 27.5,358" stroke-width="2.4"/>
<path d="M 9,340 H 28" stroke-width="1.5"/>
<path d="M 46,344 C 50,339 54,338 58,342 C 58,348 58,352 57.5,356" stroke-width="2.4"/>
<path d="M 9,392 C 18,390 28,386 28,381 C 28,376 20,375 13,377" stroke-width="2.4"/>
</g>
<g fill="#d4d4d4"><circle cx="9.5" cy="340" r="2.3"/><circle cx="27.5" cy="340" r="2.3"/><rect x="16" y="338" width="5" height="4.5"/>
<rect x="44" y="341.5" width="4.5" height="4.5"/><rect x="55.5" y="337.5" width="4.5" height="4.5"/><rect x="55.5" y="354.5" width="4.5" height="4.5"/>
<circle cx="19" cy="380.5" r="1.8"/>
<path d="M 65,373 L 61,388 L 56,386 L 60,383 L 52,384 L 54,380 L 49,382 L 52,377 Z"/>
<circle cx="47.5" cy="386" r="2.6"/><circle cx="53" cy="391" r="2.4"/><circle cx="58.5" cy="393" r="2.2"/>
</g>
<path d="M 46.5,304 L 63,312.5 L 45.5,321.5 L 53.5,302.5" fill="none" stroke="#d4d4d4" stroke-width="2.4" stroke-linejoin="round"/>
<path d="M 7.6,407 H 61.8 M 7.6,219 H 61.8 M 7.6,488.7 H 61.8 M 7.6,605.5 H 61.8 M 7.6,686.5 H 61.8 M 7.6,839.8 H 61.8" stroke="#3f3f3f" stroke-width="1.2"/>
<!-- transform, move, crop -->
<g fill="none" stroke="#d4d4d4" stroke-width="2.4">
<rect x="9.2" y="420.3" width="18.5" height="18" stroke-dasharray="5 2.5"/>
<path d="M 54.4,419.5 V 438.5 M 45,429 H 64"/>
<path d="M 9.5,457 H 13 V 472 H 28 V 475.5 M 13,460 H 25 V 471.5"/>
</g>
<g fill="#d4d4d4"><circle cx="18.4" cy="429" r="1.6"/>
<path d="M 54.4,418.5 L 50.5,423 H 58.3 Z M 54.4,439.5 L 50.5,435 H 58.3 Z M 44,429 L 48.5,425 V 433 Z M 65,429 L 60.5,425 V 433 Z"/>
</g>
<!-- gradient, picker, smart patch, similar, fill, enclose -->
<defs><linearGradient id="tgrad" x1="0" x2="1"><stop offset="0" stop-color="#222"/><stop offset="1" stop-color="#e8e8e8"/></linearGradient></defs>
<rect x="8.6" y="500.7" width="20" height="19.5" fill="url(#tgrad)" stroke="#d4d4d4" stroke-width="1.5"/>
<path d="M 60,501 A 4,4 0 0 1 64,505 L 61,508 L 62.5,509.5 L 60.5,511.5 L 59,510 L 49,520 H 45.5 V 516.5 L 55.5,506.5 L 54,505 L 56,503 L 57.5,504.5 Z" fill="#d4d4d4"/>
<path d="M 47.5,516.5 L 56.5,507.5 L 58,509 L 49,518 Z" fill="#4a4a4a"/>
<rect x="1" y="564.6" width="34" height="33.7" rx="3" fill="#5b7793" stroke="#2c3b4a" stroke-width="1.2"/>
<g fill="#d4d4d4">
<path d="M 28,537 L 30,539 L 22,548 L 19.5,545.5 Z M 18.5,546.5 L 21,549 C 20,552 16,553 13,552.5 C 15,550 16,548 18.5,546.5 Z"/>
<circle cx="10" cy="546" r="1.4"/><circle cx="12" cy="539.5" r="1.3"/><circle cx="18" cy="536" r="1.2"/><circle cx="27" cy="547" r="1.3"/><circle cx="24" cy="553" r="1.3"/><circle cx="17" cy="556" r="1.3"/><circle cx="10.5" cy="552" r="1.2"/>
<path d="M 45,552 L 59,538 L 62,541 L 48,555 Z M 46,540.5 L 50.5,536 L 54.5,540 L 50,544.5 Z M 55,549.5 L 59.5,545 L 63.5,549 L 59,553.5 Z"/>
<path d="M 18,571 L 28,581 L 19.5,589.5 L 9,580 Z M 14,567 L 16,566 L 19,571 L 17,572 Z"/>
<path d="M 27,583 C 28,587 30,590 28,592 C 26,593 25,590 27,583 Z"/>
</g>
<path d="M 11,580 L 26.5,580.5 L 19.5,587.5 Z" fill="#5b7793"/>
<path d="M 12.5,581 H 25 L 19.5,586.5 Z" fill="#d4d4d4"/>
<circle cx="54.4" cy="582" r="9.5" fill="none" stroke="#d4d4d4" stroke-width="2.6" stroke-dasharray="4.2 2.8"/>
<path d="M 49.5,581.5 A 5,5 0 0 1 59.3,581.5 Z M 49.5,583.5 H 59.3 A 5,5 0 0 1 49.5,583.5 Z" fill="#d4d4d4"/>
<!-- assistants, measure, ref -->
<g fill="none" stroke="#d4d4d4" stroke-width="2.2">
<circle cx="18.4" cy="627" r="6.5" stroke-width="1.8"/>
<path d="M 9,618 L 28,636 M 28,618 L 9,636"/>
<path d="M 45,637 H 63 L 62,628 M 45,637 L 62,620" stroke-width="2.4"/>
</g>
<path d="M 21,653 L 29,661 L 25,663 L 22,669 L 18,665 L 9,673 L 16,663 L 12,660 L 18,656 Z" fill="#d4d4d4"/>
<!-- selection tools -->
<g fill="none" stroke="#d4d4d4" stroke-width="2.5">
<rect x="9.3" y="699.2" width="19" height="19" stroke-dasharray="3.5 3"/>
<circle cx="54.7" cy="708.7" r="9.3" stroke-dasharray="3.3 2.6"/>
<path d="M 17,735.5 H 28 V 746 L 20.5,754 H 9.5 V 743 Z" stroke-dasharray="3.5 3"/>
<path d="M 46,741 C 47,736 52,735 56,736 C 62,738 65,742 64.5,748 C 64,753 60,755 56,754 M 48,744 L 53,746 M 54,748 L 53,753" stroke-dasharray="3.2 2.5"/>
<path d="M 15,778 L 27.5,790.5" stroke-width="2.8"/>
<path d="M 44.5,772 V 790 H 64 V 784 M 44.5,772 H 48" stroke-dasharray="3.3 2.8"/>
<path d="M 9.5,810 V 820 C 9.5,825 14,826.5 19,826.5 C 25,826.5 28.5,824 28.5,820 V 810" stroke-dasharray="3.3 2.8"/>
<path d="M 45,808 V 825.5 H 64 V 820 M 45,808 H 49 M 55,813 C 57,806 64,806 64,813 V 818 M 55,813 L 52,817" stroke-dasharray="3.3 2.8"/>
<circle cx="15" cy="858" r="6" stroke-width="2.6"/>
<path d="M 19.5,862.5 L 28,871" stroke-width="3.2"/>
</g>
<g fill="#d4d4d4">
<path d="M 15.8,770.5 V 785.5 M 8.3,778 H 23.3 M 10.5,772.7 L 21.1,783.3 M 21.1,772.7 L 10.5,783.3" stroke="#d4d4d4" stroke-width="2.2"/>
<path d="M 61,771 A 3.5,3.5 0 0 1 64.5,774.5 L 62,777 L 63,778 L 61.5,779.5 L 60.5,778.5 L 52,787 H 49 V 784 L 57.5,775.5 L 56.5,774.5 L 58,773 L 59,774 Z"/>
<circle cx="9.5" cy="808" r="2.5"/><circle cx="28.5" cy="808" r="2.5"/><rect x="16.5" y="806" width="5" height="4.5"/>
<path d="M 9.5,808 H 28.5" stroke="#d4d4d4" stroke-width="1.5"/>
<path d="M 45,872 C 44,866 45,862 47,862 L 48,866 V 854 C 48,852 50.5,852 50.5,854 V 862 V 851.5 C 50.5,849.5 53.5,849.5 53.5,851.5 V 862 V 852 C 53.5,850 56.5,850 56.5,852 V 862 V 854 C 56.5,852 59.5,852 59.5,854 V 866 C 60,870 59,872 58,872.5 Z"/>
</g>
<!-- splitter handle -->
<g fill="#8a8a8a"><rect x="102.5" y="590" width="2" height="2"/><rect x="102.5" y="594" width="2" height="2"/><rect x="102.5" y="598" width="2" height="2"/><rect x="102.5" y="602" width="2" height="2"/><rect x="102.5" y="606" width="2" height="2"/><rect x="102.5" y="610" width="2" height="2"/></g>

<!-- color selector docker -->
<defs>
<linearGradient id="trR" gradientUnits="userSpaceOnUse" x1="1742" y1="260.5" x2="1902.3" y2="351.4"><stop offset="0" stop-color="#f00" stop-opacity="0"/><stop offset="1" stop-color="#f00" stop-opacity="1"/></linearGradient>
<linearGradient id="trW" gradientUnits="userSpaceOnUse" x1="1848.7" y1="259.3" x2="1690.5" y2="351.4"><stop offset="0" stop-color="#fff" stop-opacity="0"/><stop offset="1" stop-color="#fff" stop-opacity="1"/></linearGradient>
<linearGradient id="bar2" x1="0" x2="1"><stop offset="0" stop-color="#858585"/><stop offset="0.5" stop-color="#fff"/><stop offset="1" stop-color="#ff7878"/></linearGradient>
<linearGradient id="bar3" x1="0" x2="1"><stop offset="0" stop-color="#7a2e2e"/><stop offset="0.5" stop-color="#fff"/><stop offset="1" stop-color="#fff"/></linearGradient>
</defs>
<g fill="none" stroke="#d4d4d4" stroke-width="1.6">
<circle cx="1627.5" cy="128.8" r="8.6"/>
<circle cx="1627.5" cy="571.6" r="8.6"/>
<rect x="1950" y="121.5" width="10" height="9.5"/><rect x="1944" y="127.5" width="10" height="9.5" fill="#4a4a4a"/>
<rect x="1950" y="564.5" width="10" height="9.5"/><rect x="1944" y="570.5" width="10" height="9.5" fill="#4a4a4a"/>
<path d="M 1979,123 L 1991,135 M 1991,123 L 1979,135 M 1979,566 L 1991,578 M 1991,566 L 1979,578" stroke-width="1.8"/>
<circle cx="1986" cy="155" r="7" stroke-width="1.8"/><path d="M 1981,150 L 1991,160" stroke-width="1.8"/>
<rect x="1629.5" y="159.5" width="17" height="16"/>
</g>
<g fill="#d4d4d4">
<path d="M 1623,127 V 125 A 4.5,4.5 0 0 1 1632,125 H 1630 A 2.5,2.5 0 0 0 1625,125 V 127 Z"/><rect x="1622.5" y="127.5" width="10" height="6" rx="1"/>
<path d="M 1623,570 V 568 A 4.5,4.5 0 0 1 1632,568 H 1630 A 2.5,2.5 0 0 0 1625,568 V 570 Z"/><rect x="1622.5" y="570.5" width="10" height="6" rx="1"/>
<rect x="1629.5" y="159.5" width="17" height="2.5"/><rect x="1632" y="164" width="2.6" height="9"/><rect x="1636.5" y="164.5" width="8" height="1.8"/><rect x="1636.5" y="168" width="8" height="1.8"/><rect x="1636.5" y="171.5" width="8" height="1.8"/>
</g>
<polygon points="1795,167 1690.5,351.4 1902.3,351.4" fill="#000"/>
<polygon points="1795,167 1690.5,351.4 1902.3,351.4" fill="url(#trR)" style="mix-blend-mode:plus-lighter"/>
<polygon points="1795,167 1690.5,351.4 1902.3,351.4" fill="url(#trW)" style="mix-blend-mode:plus-lighter"/>
<path d="M 1647,275 L 1669,276.5" stroke="#222" stroke-width="3.5"/>
<path d="M 1647.5,275 L 1668.5,276.5" stroke="#fff" stroke-width="1.5"/>
<circle cx="1686.4" cy="353.3" r="5.5" fill="none" stroke="#000" stroke-width="2.2"/>
<circle cx="1686.4" cy="353.3" r="3.8" fill="none" stroke="#fff" stroke-width="1"/>
<rect x="1614" y="441" width="360" height="15" fill="#fff"/>
<rect x="1614" y="458" width="360" height="15" fill="url(#bar2)"/>
<rect x="1614" y="474.5" width="360" height="14.5" fill="url(#bar3)"/>
<g fill="#fff" stroke="#333" stroke-width="2"><rect x="1788" y="442" width="12" height="13.5"/><rect x="1788" y="458.5" width="12" height="14"/><rect x="1788" y="475" width="12" height="13.5"/></g>
<g>
<rect x="1974" y="167" width="24" height="24" fill="#fff"/>
<rect x="1974" y="191" width="24" height="24" fill="#2b0604"/>
<rect x="1974" y="215" width="24" height="24" fill="#bcbcbc"/>
<rect x="1974" y="239" width="24" height="24" fill="#0d3514"/>
<rect x="1974" y="263" width="24" height="24" fill="#572b12"/>
<rect x="1974" y="287" width="24" height="24" fill="#7e4a26"/>
<rect x="1974" y="311" width="24" height="24" fill="#13591b"/>
<rect x="1974" y="335" width="24" height="24" fill="#ffd2cd"/>
<rect x="1974" y="359" width="24" height="24" fill="#ffc6f3"/>
<rect x="1974" y="383" width="24" height="24" fill="#ff00cf"/>
<rect x="1974" y="407" width="24" height="24" fill="#0a20ff"/>
<rect x="1974" y="431" width="24" height="24" fill="#ff0000"/>
<rect x="1974" y="455" width="24" height="24" fill="#000"/>
</g>
<g fill="none" stroke="#d4d4d4" stroke-width="2.2">
<path d="M 1619.5,507.5 A 6.5,6.5 0 0 1 1630.5,501.5"/>
<path d="M 1632.5,504.5 A 6.5,6.5 0 0 1 1621.5,510.5"/>
</g>
<path d="M 1629,498.5 L 1633.5,500 L 1630.5,504 Z M 1623,513.5 L 1618.5,512 L 1621.5,508 Z" fill="#d4d4d4"/>
<g fill="#8a8a8a"><rect x="1796" y="521" width="3" height="2.5"/><rect x="1801" y="521" width="3" height="2.5"/><rect x="1806" y="521" width="3" height="2.5"/><rect x="1811" y="521" width="3" height="2.5"/><rect x="1816" y="521" width="3" height="2.5"/><rect x="1821" y="521" width="3" height="2.5"/></g>

<defs><clipPath id="lclip"><rect x="1616" y="684" width="366" height="350"/></clipPath>
<pattern id="lchk" width="8" height="8" patternUnits="userSpaceOnUse"><rect width="8" height="8" fill="#fff"/><rect width="4" height="4" fill="#cfcfcf"/><rect x="4" y="4" width="4" height="4" fill="#cfcfcf"/></pattern>
<pattern id="lchk2" width="8" height="8" patternUnits="userSpaceOnUse"><rect width="8" height="8" fill="#888"/><rect width="4" height="4" fill="#7a7a7a"/><rect x="4" y="4" width="4" height="4" fill="#7a7a7a"/></pattern>
</defs><g clip-path="url(#lclip)">
<rect x="1616" y="710.6" width="366" height="1" fill="#363636"/>
<path d="M 1621,690.4 C 1626,681.4 1637,681.4 1643,690.4" fill="none" stroke="#d0d0d0" stroke-width="1.5"/>
<path d="M 1621,691.4 C 1626,701.4 1637,701.4 1643,691.4" fill="none" stroke="#d0d0d0" stroke-width="2.2"/>
<path d="M 1626,689.4 A 6,6 0 0 1 1638,689.4 A 6,4 0 0 1 1626,689.4 Z" fill="#d0d0d0"/>
<rect x="1655" y="680.4" width="29" height="20" fill="url(#lchk)"/>
<rect x="1678.1" y="694.5" width="1.2" height="1.2" fill="#cc2222"/>
<path d="M 1699,675.4 H 1710 V 685.4 L 1706,688.9 H 1699 V 684.4 M 1695,677.4 L 1704,684.4" fill="none" stroke="#d0d0d0" stroke-width="1.5"/>
<rect x="1900.3" y="688.9" width="18" height="11.5" fill="#737373"/>
<path d="M 1909.5,680.4 C 1914.5,680.4 1917,684.4 1917,689.4" fill="none" stroke="#737373" stroke-width="2.2"/>
<text x="1926.5" y="697.9" font-family="Liberation Sans" font-style="italic" font-size="27" fill="#737373">α</text>
<rect x="1954.30" y="679.40" width="7.6" height="7.55" fill="#737373"/>
<rect x="1954.30" y="686.90" width="7.6" height="7.55" fill="#545454"/>
<rect x="1954.30" y="694.40" width="7.6" height="7.55" fill="#737373"/>
<rect x="1961.87" y="679.40" width="7.6" height="7.55" fill="#545454"/>
<rect x="1961.87" y="686.90" width="7.6" height="7.55" fill="#737373"/>
<rect x="1961.87" y="694.40" width="7.6" height="7.55" fill="#545454"/>
<rect x="1969.44" y="679.40" width="7.6" height="7.55" fill="#737373"/>
<rect x="1969.44" y="686.90" width="7.6" height="7.55" fill="#545454"/>
<rect x="1969.44" y="694.40" width="7.6" height="7.55" fill="#737373"/>
<rect x="1616" y="751.2" width="366" height="1" fill="#363636"/>
<path d="M 1621,731.0 C 1626,722.0 1637,722.0 1643,731.0" fill="none" stroke="#d0d0d0" stroke-width="1.5"/>
<path d="M 1621,732.0 C 1626,742.0 1637,742.0 1643,732.0" fill="none" stroke="#d0d0d0" stroke-width="2.2"/>
<path d="M 1626,730.0 A 6,6 0 0 1 1638,730.0 A 6,4 0 0 1 1626,730.0 Z" fill="#d0d0d0"/>
<rect x="1655" y="721.5" width="29" height="19" fill="#f2f2f2"/>
<path d="M 1661,739.0 V 725.0 H 1665 V 739.0 Z M 1668,739.0 V 730.0 H 1672 V 739.0 Z M 1675,739.0 V 726.0 H 1679 V 739.0 Z" fill="#a8a8a8"/>
<path d="M 1699,716.0 H 1710 V 726.0 L 1706,729.5 H 1699 V 725.0 M 1695,718.0 L 1704,725.0" fill="none" stroke="#d0d0d0" stroke-width="1.5"/>
<rect x="1900.3" y="729.5" width="18" height="11.5" fill="#737373"/>
<path d="M 1909.5,721.0 C 1914.5,721.0 1917,725.0 1917,730.0" fill="none" stroke="#737373" stroke-width="2.2"/>
<text x="1926.5" y="738.5" font-family="Liberation Sans" font-style="italic" font-size="27" fill="#737373">α</text>
<rect x="1954.30" y="720.00" width="7.6" height="7.55" fill="#545454"/>
<rect x="1954.30" y="727.50" width="7.6" height="7.55" fill="#737373"/>
<rect x="1954.30" y="735.00" width="7.6" height="7.55" fill="#545454"/>
<rect x="1961.87" y="720.00" width="7.6" height="7.55" fill="#737373"/>
<rect x="1961.87" y="727.50" width="7.6" height="7.55" fill="#545454"/>
<rect x="1961.87" y="735.00" width="7.6" height="7.55" fill="#737373"/>
<rect x="1969.44" y="720.00" width="7.6" height="7.55" fill="#545454"/>
<rect x="1969.44" y="727.50" width="7.6" height="7.55" fill="#737373"/>
<rect x="1969.44" y="735.00" width="7.6" height="7.55" fill="#545454"/>
<rect x="1616" y="791.6" width="366" height="1" fill="#363636"/>
<path d="M 1621,771.4 C 1626,762.4 1637,762.4 1643,771.4" fill="none" stroke="#d0d0d0" stroke-width="1.5"/>
<path d="M 1621,772.4 C 1626,782.4 1637,782.4 1643,772.4" fill="none" stroke="#d0d0d0" stroke-width="2.2"/>
<path d="M 1626,770.4 A 6,6 0 0 1 1638,770.4 A 6,4 0 0 1 1626,770.4 Z" fill="#d0d0d0"/>
<rect x="1655" y="757.9" width="29" height="27" fill="url(#lchk)"/>
<rect x="1680.9" y="781.7" width="1.2" height="1.2" fill="#2233cc"/>
<rect x="1658.4" y="761.9" width="1.2" height="1.2" fill="#2233cc"/>
<rect x="1677.9" y="776.8" width="1.2" height="1.2" fill="#2233cc"/>
<rect x="1673.7" y="767.0" width="1.2" height="1.2" fill="#2233cc"/>
<rect x="1672.1" y="773.9" width="1.2" height="1.2" fill="#2233cc"/>
<rect x="1671.5" y="763.5" width="1.2" height="1.2" fill="#2233cc"/>
<rect x="1667.8" y="769.0" width="1.2" height="1.2" fill="#2233cc"/>
<rect x="1675.1" y="782.8" width="1.2" height="1.2" fill="#2233cc"/>
<rect x="1680.7" y="772.4" width="1.2" height="1.2" fill="#2233cc"/>
<rect x="1668.1" y="766.1" width="1.2" height="1.2" fill="#2233cc"/>
<rect x="1657.9" y="760.5" width="1.2" height="1.2" fill="#2233cc"/>
<rect x="1668.6" y="767.2" width="1.2" height="1.2" fill="#2233cc"/>
<rect x="1666.5" y="780.4" width="1.2" height="1.2" fill="#2233cc"/>
<rect x="1670.1" y="772.8" width="1.2" height="1.2" fill="#2233cc"/>
<rect x="1662.9" y="760.4" width="1.2" height="1.2" fill="#2233cc"/>
<rect x="1665.1" y="763.0" width="1.2" height="1.2" fill="#2233cc"/>
<path d="M 1699,756.4 H 1710 V 766.4 L 1706,769.9 H 1699 V 765.4 M 1695,758.4 L 1704,765.4" fill="none" stroke="#d0d0d0" stroke-width="1.5"/>
<rect x="1900.3" y="769.9" width="18" height="11.5" fill="#737373"/>
<path d="M 1909.5,761.4 C 1914.5,761.4 1917,765.4 1917,770.4" fill="none" stroke="#737373" stroke-width="2.2"/>
<text x="1926.5" y="778.9" font-family="Liberation Sans" font-style="italic" font-size="27" fill="#737373">α</text>
<rect x="1954.30" y="760.40" width="7.6" height="7.55" fill="#737373"/>
<rect x="1954.30" y="767.90" width="7.6" height="7.55" fill="#545454"/>
<rect x="1954.30" y="775.40" width="7.6" height="7.55" fill="#737373"/>
<rect x="1961.87" y="760.40" width="7.6" height="7.55" fill="#545454"/>
<rect x="1961.87" y="767.90" width="7.6" height="7.55" fill="#737373"/>
<rect x="1961.87" y="775.40" width="7.6" height="7.55" fill="#545454"/>
<rect x="1969.44" y="760.40" width="7.6" height="7.55" fill="#737373"/>
<rect x="1969.44" y="767.90" width="7.6" height="7.55" fill="#545454"/>
<rect x="1969.44" y="775.40" width="7.6" height="7.55" fill="#737373"/>
<rect x="1616" y="832.2" width="366" height="1" fill="#363636"/>
<path d="M 1621,812.0 C 1626,803.0 1637,803.0 1643,812.0" fill="none" stroke="#d0d0d0" stroke-width="1.5"/>
<path d="M 1621,813.0 C 1626,823.0 1637,823.0 1643,813.0" fill="none" stroke="#d0d0d0" stroke-width="2.2"/>
<path d="M 1626,811.0 A 6,6 0 0 1 1638,811.0 A 6,4 0 0 1 1626,811.0 Z" fill="#d0d0d0"/>
<rect x="1655" y="799.5" width="29" height="25" fill="url(#lchk)"/>
<rect x="1662.9" y="812.9" width="1.2" height="1.2" fill="#cc2222"/>
<rect x="1666.2" y="814.2" width="1.2" height="1.2" fill="#cc2222"/>
<rect x="1672.6" y="802.9" width="1.2" height="1.2" fill="#cc2222"/>
<rect x="1657.3" y="819.1" width="1.2" height="1.2" fill="#cc2222"/>
<rect x="1663.5" y="806.4" width="1.2" height="1.2" fill="#cc2222"/>
<rect x="1681.9" y="811.4" width="1.2" height="1.2" fill="#cc2222"/>
<rect x="1677.9" y="811.5" width="1.2" height="1.2" fill="#cc2222"/>
<rect x="1673.0" y="804.7" width="1.2" height="1.2" fill="#cc2222"/>
<rect x="1672.9" y="819.7" width="1.2" height="1.2" fill="#cc2222"/>
<rect x="1670.1" y="817.1" width="1.2" height="1.2" fill="#cc2222"/>
<rect x="1673.8" y="802.8" width="1.2" height="1.2" fill="#cc2222"/>
<rect x="1676.0" y="813.9" width="1.2" height="1.2" fill="#cc2222"/>
<rect x="1664.5" y="802.2" width="1.2" height="1.2" fill="#cc2222"/>
<rect x="1678.6" y="811.4" width="1.2" height="1.2" fill="#cc2222"/>
<path d="M 1699,797.0 H 1710 V 807.0 L 1706,810.5 H 1699 V 806.0 M 1695,799.0 L 1704,806.0" fill="none" stroke="#d0d0d0" stroke-width="1.5"/>
<rect x="1900.3" y="810.5" width="18" height="11.5" fill="#737373"/>
<path d="M 1909.5,802.0 C 1914.5,802.0 1917,806.0 1917,811.0" fill="none" stroke="#737373" stroke-width="2.2"/>
<text x="1926.5" y="819.5" font-family="Liberation Sans" font-style="italic" font-size="27" fill="#737373">α</text>
<rect x="1954.30" y="801.00" width="7.6" height="7.55" fill="#545454"/>
<rect x="1954.30" y="808.50" width="7.6" height="7.55" fill="#737373"/>
<rect x="1954.30" y="816.00" width="7.6" height="7.55" fill="#545454"/>
<rect x="1961.87" y="801.00" width="7.6" height="7.55" fill="#737373"/>
<rect x="1961.87" y="808.50" width="7.6" height="7.55" fill="#545454"/>
<rect x="1961.87" y="816.00" width="7.6" height="7.55" fill="#737373"/>
<rect x="1969.44" y="801.00" width="7.6" height="7.55" fill="#545454"/>
<rect x="1969.44" y="808.50" width="7.6" height="7.55" fill="#737373"/>
<rect x="1969.44" y="816.00" width="7.6" height="7.55" fill="#545454"/>
<rect x="1616" y="872.6" width="366" height="1" fill="#363636"/>
<path d="M 1621,852.4 C 1626,843.4 1637,843.4 1643,852.4" fill="none" stroke="#d0d0d0" stroke-width="1.5"/>
<path d="M 1621,853.4 C 1626,863.4 1637,863.4 1643,853.4" fill="none" stroke="#d0d0d0" stroke-width="2.2"/>
<path d="M 1626,851.4 A 6,6 0 0 1 1638,851.4 A 6,4 0 0 1 1626,851.4 Z" fill="#d0d0d0"/>
<rect x="1655" y="842.9" width="29" height="19" fill="url(#lchk)"/>
<rect x="1662.9" y="846.4" width="1.2" height="1.2" fill="#cc2222"/>
<rect x="1666.9" y="847.2" width="1.2" height="1.2" fill="#cc2222"/>
<rect x="1658.7" y="850.9" width="1.2" height="1.2" fill="#cc2222"/>
<rect x="1679.9" y="856.9" width="1.2" height="1.2" fill="#cc2222"/>
<rect x="1676.1" y="848.2" width="1.2" height="1.2" fill="#cc2222"/>
<rect x="1670.4" y="849.1" width="1.2" height="1.2" fill="#cc2222"/>
<path d="M 1699,837.4 H 1710 V 847.4 L 1706,850.9 H 1699 V 846.4 M 1695,839.4 L 1704,846.4" fill="none" stroke="#d0d0d0" stroke-width="1.5"/>
<rect x="1900.3" y="850.9" width="18" height="11.5" fill="#737373"/>
<path d="M 1909.5,842.4 C 1914.5,842.4 1917,846.4 1917,851.4" fill="none" stroke="#737373" stroke-width="2.2"/>
<text x="1926.5" y="859.9" font-family="Liberation Sans" font-style="italic" font-size="27" fill="#737373">α</text>
<rect x="1954.30" y="841.40" width="7.6" height="7.55" fill="#737373"/>
<rect x="1954.30" y="848.90" width="7.6" height="7.55" fill="#545454"/>
<rect x="1954.30" y="856.40" width="7.6" height="7.55" fill="#737373"/>
<rect x="1961.87" y="841.40" width="7.6" height="7.55" fill="#545454"/>
<rect x="1961.87" y="848.90" width="7.6" height="7.55" fill="#737373"/>
<rect x="1961.87" y="856.40" width="7.6" height="7.55" fill="#545454"/>
<rect x="1969.44" y="841.40" width="7.6" height="7.55" fill="#737373"/>
<rect x="1969.44" y="848.90" width="7.6" height="7.55" fill="#545454"/>
<rect x="1969.44" y="856.40" width="7.6" height="7.55" fill="#737373"/>
<rect x="1649" y="874.8" width="333" height="39.5" fill="#52718f"/>
<rect x="1649" y="912.8" width="333" height="1.5" fill="#2e3f50"/>
<rect x="1616" y="913.2" width="366" height="1" fill="#363636"/>
<path d="M 1621,893.0 C 1626,884.0 1637,884.0 1643,893.0" fill="none" stroke="#d0d0d0" stroke-width="1.5"/>
<path d="M 1621,894.0 C 1626,904.0 1637,904.0 1643,894.0" fill="none" stroke="#d0d0d0" stroke-width="2.2"/>
<path d="M 1626,892.0 A 6,6 0 0 1 1638,892.0 A 6,4 0 0 1 1626,892.0 Z" fill="#d0d0d0"/>
<rect x="1652.5" y="878.5" width="32" height="29.5" fill="#fff" stroke="#1e1e1e" stroke-width="2"/>
<path d="M 1699,878.0 H 1710 V 888.0 L 1706,891.5 H 1699 V 887.0 M 1695,880.0 L 1704,887.0" fill="none" stroke="#d0d0d0" stroke-width="1.5"/>
<rect x="1900.3" y="891.5" width="18" height="11.5" fill="#8aa0b5"/>
<path d="M 1909.5,883.0 C 1914.5,883.0 1917,887.0 1917,892.0" fill="none" stroke="#8aa0b5" stroke-width="2.2"/>
<text x="1926.5" y="900.5" font-family="Liberation Sans" font-style="italic" font-size="27" fill="#8aa0b5">α</text>
<rect x="1954.30" y="882.00" width="7.6" height="7.55" fill="#6a849d"/>
<rect x="1954.30" y="889.50" width="7.6" height="7.55" fill="#8aa0b5"/>
<rect x="1954.30" y="897.00" width="7.6" height="7.55" fill="#6a849d"/>
<rect x="1961.87" y="882.00" width="7.6" height="7.55" fill="#8aa0b5"/>
<rect x="1961.87" y="889.50" width="7.6" height="7.55" fill="#6a849d"/>
<rect x="1961.87" y="897.00" width="7.6" height="7.55" fill="#8aa0b5"/>
<rect x="1969.44" y="882.00" width="7.6" height="7.55" fill="#6a849d"/>
<rect x="1969.44" y="889.50" width="7.6" height="7.55" fill="#8aa0b5"/>
<rect x="1969.44" y="897.00" width="7.6" height="7.55" fill="#6a849d"/>
<rect x="1616" y="953.6" width="366" height="1" fill="#363636"/>
<path d="M 1621,932.4 C 1626,923.4 1637,923.4 1643,932.4" fill="none" stroke="#5a5a5a" stroke-width="1.3"/>
<path d="M 1621,935.4 C 1626,943.4 1637,943.4 1643,935.4" fill="none" stroke="#777" stroke-width="2"/>
<rect x="1655" y="920.9" width="29" height="25" fill="url(#lchk2)"/>
<path d="M 1660,944.9 V 925.4 H 1665 V 944.9 Z M 1667,944.9 V 931.4 H 1672 V 944.9 Z M 1674,944.9 V 926.4 H 1680 V 944.9 Z" fill="#a89290"/>
<path d="M 1699,918.4 H 1710 V 928.4 L 1706,931.9 H 1699 V 927.4 M 1695,920.4 L 1704,927.4" fill="none" stroke="#6e6e6e" stroke-width="1.5"/>
<rect x="1900.3" y="931.9" width="18" height="11.5" fill="#737373"/>
<path d="M 1909.5,923.4 C 1914.5,923.4 1917,927.4 1917,932.4" fill="none" stroke="#737373" stroke-width="2.2"/>
<text x="1926.5" y="940.9" font-family="Liberation Sans" font-style="italic" font-size="27" fill="#737373">α</text>
<rect x="1954.30" y="922.40" width="7.6" height="7.55" fill="#737373"/>
<rect x="1954.30" y="929.90" width="7.6" height="7.55" fill="#545454"/>
<rect x="1954.30" y="937.40" width="7.6" height="7.55" fill="#737373"/>
<rect x="1961.87" y="922.40" width="7.6" height="7.55" fill="#545454"/>
<rect x="1961.87" y="929.90" width="7.6" height="7.55" fill="#737373"/>
<rect x="1961.87" y="937.40" width="7.6" height="7.55" fill="#545454"/>
<rect x="1969.44" y="922.40" width="7.6" height="7.55" fill="#737373"/>
<rect x="1969.44" y="929.90" width="7.6" height="7.55" fill="#545454"/>
<rect x="1969.44" y="937.40" width="7.6" height="7.55" fill="#737373"/>
<rect x="1616" y="994.2" width="366" height="1" fill="#363636"/>
<path d="M 1621,973.0 C 1626,964.0 1637,964.0 1643,973.0" fill="none" stroke="#5a5a5a" stroke-width="1.3"/>
<path d="M 1621,976.0 C 1626,984.0 1637,984.0 1643,976.0" fill="none" stroke="#777" stroke-width="2"/>
<rect x="1655" y="962.5" width="29" height="23" fill="url(#lchk2)"/>
<path d="M 1660,984.5 V 966.0 H 1665 V 984.5 Z M 1667,984.5 V 972.0 H 1672 V 984.5 Z M 1674,984.5 V 967.0 H 1680 V 984.5 Z" fill="#b8b8b8"/>
<path d="M 1699,959.0 H 1710 V 969.0 L 1706,972.5 H 1699 V 968.0 M 1695,961.0 L 1704,968.0" fill="none" stroke="#6e6e6e" stroke-width="1.5"/>
<rect x="1900.3" y="972.5" width="18" height="11.5" fill="#737373"/>
<path d="M 1909.5,964.0 C 1914.5,964.0 1917,968.0 1917,973.0" fill="none" stroke="#737373" stroke-width="2.2"/>
<text x="1926.5" y="981.5" font-family="Liberation Sans" font-style="italic" font-size="27" fill="#737373">α</text>
<rect x="1954.30" y="963.00" width="7.6" height="7.55" fill="#545454"/>
<rect x="1954.30" y="970.50" width="7.6" height="7.55" fill="#737373"/>
<rect x="1954.30" y="978.00" width="7.6" height="7.55" fill="#545454"/>
<rect x="1961.87" y="963.00" width="7.6" height="7.55" fill="#737373"/>
<rect x="1961.87" y="970.50" width="7.6" height="7.55" fill="#545454"/>
<rect x="1961.87" y="978.00" width="7.6" height="7.55" fill="#737373"/>
<rect x="1969.44" y="963.00" width="7.6" height="7.55" fill="#545454"/>
<rect x="1969.44" y="970.50" width="7.6" height="7.55" fill="#737373"/>
<rect x="1969.44" y="978.00" width="7.6" height="7.55" fill="#545454"/>
<rect x="1616" y="1034.7" width="366" height="1" fill="#363636"/>
<path d="M 1621,1014.4 C 1626,1005.4 1637,1005.4 1643,1014.4" fill="none" stroke="#d0d0d0" stroke-width="1.5"/>
<path d="M 1621,1015.4 C 1626,1025.4 1637,1025.4 1643,1015.4" fill="none" stroke="#d0d0d0" stroke-width="2.2"/>
<path d="M 1626,1013.4 A 6,6 0 0 1 1638,1013.4 A 6,4 0 0 1 1626,1013.4 Z" fill="#d0d0d0"/>
<rect x="1655" y="1005.4" width="29" height="18" fill="#e3dcc4"/>
<path d="M 1699,999.4 H 1710 V 1009.4 L 1706,1012.9 H 1699 V 1008.4 M 1695,1001.4 L 1704,1008.4" fill="none" stroke="#d0d0d0" stroke-width="1.5"/>
<rect x="1900.3" y="1012.9" width="18" height="11.5" fill="#737373"/>
<path d="M 1909.5,1004.4 C 1914.5,1004.4 1917,1008.4 1917,1013.4" fill="none" stroke="#737373" stroke-width="2.2"/>
<text x="1926.5" y="1021.9" font-family="Liberation Sans" font-style="italic" font-size="27" fill="#737373">α</text>
<rect x="1954.30" y="1003.40" width="7.6" height="7.55" fill="#737373"/>
<rect x="1954.30" y="1010.90" width="7.6" height="7.55" fill="#545454"/>
<rect x="1954.30" y="1018.40" width="7.6" height="7.55" fill="#737373"/>
<rect x="1961.87" y="1003.40" width="7.6" height="7.55" fill="#545454"/>
<rect x="1961.87" y="1010.90" width="7.6" height="7.55" fill="#737373"/>
<rect x="1961.87" y="1018.40" width="7.6" height="7.55" fill="#545454"/>
<rect x="1969.44" y="1003.40" width="7.6" height="7.55" fill="#737373"/>
<rect x="1969.44" y="1010.90" width="7.6" height="7.55" fill="#545454"/>
<rect x="1969.44" y="1018.40" width="7.6" height="7.55" fill="#737373"/>
</g>
<rect x="1983" y="685" width="13" height="14" fill="#474747" stroke="#383838" stroke-width="1"/>
<path d="M 1985.5,695 H 1993.5 L 1989.5,690 Z" fill="#bdbdbd"/>
<rect x="1983.5" y="745" width="12.5" height="275" fill="#474747" stroke="#393939" stroke-width="1" rx="2"/>
<rect x="1983" y="1021" width="13" height="13" fill="#474747" stroke="#383838" stroke-width="1"/>
<path d="M 1985.5,1025 H 1993.5 L 1989.5,1030 Z" fill="#bdbdbd"/>
<g fill="none" stroke="#d4d4d4" stroke-width="2.8">
<path d="M 1636.4,1046 V 1073 M 1623,1059.5 H 1650"/>
<path d="M 1690,1050 H 1713 V 1072 H 1690 Z M 1684,1052 V 1074 H 1706" stroke-width="2.6"/>
<path d="M 1731,1052 L 1746.5,1067 L 1762,1052"/>
<path d="M 1779,1067 L 1794.5,1052 L 1810,1067"/>
<path d="M 1827,1050.5 H 1858 M 1827,1059.5 H 1858 M 1827,1068.5 H 1858" stroke-width="2.4"/>
</g>
<g fill="#d4d4d4"><circle cx="1850" cy="1050.5" r="3"/><circle cx="1835" cy="1059.5" r="3"/><circle cx="1843" cy="1068.5" r="3"/>
<path d="M 1662,1058 H 1670 L 1666,1062 Z M 1868,1058 H 1876 L 1872,1062 Z" fill="#bdbdbd"/>
<path d="M 1962,1049 H 1989 V 1052 H 1962 Z M 1971,1049 V 1046 A 2,2 0 0 1 1973,1044 H 1978 A 2,2 0 0 1 1980,1046 V 1049 H 1978 V 1046.5 H 1973 V 1049 Z M 1965,1054 H 1986 V 1071 A 3,3 0 0 1 1983,1074 H 1968 A 3,3 0 0 1 1965,1071 Z"/>
</g>
<path d="M 1933,606 H 1941 L 1937,611 Z M 1932,650 L 1937,645 L 1942,650 Z M 1932,665 L 1937,670 L 1942,665 Z" fill="#9a9a9a"/>
<path d="M 1932,638 V 679" stroke="#333" stroke-width="1"/>
<path d="M 1965.5,597 H 1984.5 L 1977,609 V 620 L 1973,617 V 609 Z" fill="none" stroke="#d4d4d4" stroke-width="1.8" stroke-linejoin="round"/>
<path d="M 1965,651 H 1983 M 1965,659 H 1983 M 1965,667 H 1983" stroke="#d4d4d4" stroke-width="2.4"/>
<g fill="#8a8a8a"><rect x="1610.5" y="590" width="2" height="2"/><rect x="1610.5" y="594" width="2" height="2"/><rect x="1610.5" y="598" width="2" height="2"/><rect x="1610.5" y="602" width="2" height="2"/><rect x="1610.5" y="606" width="2" height="2"/><rect x="1610.5" y="610" width="2" height="2"/></g>

<!-- canvas scrollbars -->
<rect x="1592" y="153" width="14" height="12" fill="#474747" stroke="#383838" stroke-width="1"/>
<path d="M 1595,162 H 1603 L 1599,157 Z" fill="#bdbdbd"/>
<rect x="1592" y="1054" width="14" height="13" fill="#474747" stroke="#383838" stroke-width="1"/>
<path d="M 1595,1058 H 1603 L 1599,1063 Z" fill="#bdbdbd"/>
<rect x="1593" y="449" width="12.5" height="316" fill="#484848" stroke="#555" stroke-width="1" rx="2"/>
<path d="M 1591,153 V 1068" stroke="#fff" stroke-width="1.6"/>
<path d="M 1591,153 V 1068" stroke="#000" stroke-width="1.6" stroke-dasharray="5 5"/>
<rect x="105.5" y="1069" width="13" height="13" fill="#474747" stroke="#383838" stroke-width="1"/>
<path d="M 115,1071.5 V 1079.5 L 110,1075.5 Z" fill="#bdbdbd"/>
<rect x="1577.5" y="1069" width="13" height="13" fill="#474747" stroke="#383838" stroke-width="1"/>
<path d="M 1582,1071.5 V 1079.5 L 1587,1075.5 Z" fill="#bdbdbd"/>
<!-- tab krita icon and close -->
<defs><linearGradient id="kr" x1="0.8" y1="0" x2="0.2" y2="1"><stop offset="0" stop-color="#ff30f0"/><stop offset="0.45" stop-color="#e8a0e0"/><stop offset="0.55" stop-color="#90c0f0"/><stop offset="1" stop-color="#30f0e8"/></linearGradient>
<radialGradient id="kry" cx="0.85" cy="0.75" r="0.45"><stop offset="0" stop-color="#ffff60"/><stop offset="1" stop-color="#ffff60" stop-opacity="0"/></radialGradient></defs>
<circle cx="127.5" cy="134" r="7.5" fill="url(#kr)"/>
<circle cx="127.5" cy="134" r="7.5" fill="url(#kry)"/>
<path d="M 120.5,127 L 128,133.5" stroke="#3a3a40" stroke-width="2.4"/>
<circle cx="131" cy="136.5" r="1.8" fill="#111"/>
<path d="M 1574,131.5 L 1586,143.5 M 1586,131.5 L 1574,143.5" stroke="#dcdcdc" stroke-width="2"/>
<!-- status bar icons -->
<rect x="11.5" y="1094.5" width="21" height="21" fill="none" stroke="#cfcfcf" stroke-width="1.5"/>
<circle cx="22" cy="1105" r="6" fill="none" stroke="#cfcfcf" stroke-width="1.4" stroke-dasharray="1.4 1.75"/>
<path d="M 56,1102 V 1099.5 H 58.5 M 67.5,1099.5 H 70 V 1102 M 70,1110 V 1112.5 H 67.5 M 58.5,1112.5 H 56 V 1110" fill="none" stroke="#cfcfcf" stroke-width="1.2"/>
<rect x="59" y="1102" width="8" height="7.5" fill="none" stroke="#cfcfcf" stroke-width="1.4"/><rect x="59" y="1102" width="8" height="2" fill="#cfcfcf"/>

<path d="M 1354,1116.5 H 1363.5" stroke="#d6d6d6" stroke-width="1.2"/>
<circle cx="1540.3" cy="1106" r="14" fill="#2e2e2e" stroke="#3a3a3a" stroke-width="1"/>
<path d="M 1540.3,1094 V 1118 M 1528.3,1106 H 1552.3" stroke="#666" stroke-width="1" stroke-dasharray="2 2"/>
<path d="M 1540.3,1106 H 1553" stroke="#e8e8e8" stroke-width="1.5"/>
<circle cx="1540.3" cy="1106" r="1.8" fill="#e8e8e8"/><circle cx="1553" cy="1106" r="1.5" fill="#e8e8e8"/>
<rect x="1843.8" y="1104.5" width="122" height="3" rx="1.5" fill="#2e2e2e"/>
<rect x="1843.8" y="1104.5" width="33" height="3" rx="1.5" fill="#557590"/>
<rect x="1872" y="1100.5" width="11.5" height="11.5" rx="3" fill="#4e4e4e" stroke="#2e2e2e" stroke-width="1.2"/>
<path d="M 1974,1100.5 H 1991.5 V 1111 H 1974 Z M 1982.8,1111 V 1115 M 1977,1115.5 H 1988.5" fill="none" stroke="#cfcfcf" stroke-width="1.4"/>
<path d="M 1980,1106 L 1983,1104 L 1986,1106" fill="none" stroke="#cfcfcf" stroke-width="1"/>
<!-- nav bar -->
<g fill="#fff">
<circle cx="120" cy="1154" r="2.3"/><circle cx="131.5" cy="1154" r="2.3"/><circle cx="143" cy="1154" r="2.3"/>
<circle cx="120" cy="1163.5" r="2.3"/><circle cx="131.5" cy="1163.5" r="2.3"/><circle cx="143" cy="1163.5" r="2.3"/>
<circle cx="120" cy="1173" r="2.3"/><circle cx="131.5" cy="1173" r="2.3"/><circle cx="143" cy="1173" r="2.3"/>
</g>
<path d="M 1577.8,1152 L 1566,1163.3 L 1577.8,1174.6" fill="none" stroke="#fff" stroke-width="2"/>
<rect x="1704.5" y="1152.5" width="22.5" height="22" rx="7" fill="none" stroke="#fff" stroke-width="2"/>
<path d="M 1849.6,1153 V 1174.2 M 1859.5,1153 V 1174.2 M 1869,1153 V 1174.2" stroke="#fff" stroke-width="2.2"/>
<!-- dock -->
<defs>
<path id="sq" d="M 0,-24 C 19,-24 24,-19 24,0 C 24,19 19,24 0,24 C -19,24 -24,19 -24,0 C -24,-19 -19,-24 0,-24 Z"/>
<linearGradient id="krg" x1="0" y1="0" x2="1" y2="1"><stop offset="0" stop-color="#c040ff"/><stop offset="0.35" stop-color="#ff50b0"/><stop offset="0.6" stop-color="#60a0ff"/><stop offset="1" stop-color="#a0ff60"/></linearGradient>
<radialGradient id="rsg"><stop offset="0" stop-color="#c03a20"/><stop offset="1" stop-color="#5a1008"/></radialGradient>
</defs>
<g transform="translate(763.4,1163.2)"><use href="#sq" fill="#d81d4c"/><rect x="-15" y="-12" width="30" height="24" rx="4" fill="#f4f4f4"/><circle cx="0" cy="0" r="6.5" fill="#d81d4c"/><circle cx="9" cy="-6.5" r="2.5" fill="#d81d4c"/></g>
<g transform="translate(842.4,1163.2)"><use href="#sq" fill="#c8106c"/>
<g fill="#f4f4f4"><ellipse cx="0" cy="-9" rx="5" ry="7"/><ellipse cx="0" cy="9" rx="5" ry="7"/><ellipse cx="-8.5" cy="-4.5" rx="5" ry="7" transform="rotate(-60 -8.5 -4.5)"/><ellipse cx="8.5" cy="-4.5" rx="5" ry="7" transform="rotate(60 8.5 -4.5)"/><ellipse cx="-8.5" cy="4.5" rx="5" ry="7" transform="rotate(60 -8.5 4.5)"/><ellipse cx="8.5" cy="4.5" rx="5" ry="7" transform="rotate(-60 8.5 4.5)"/></g><circle r="3" fill="#c8106c"/></g>
<g transform="translate(921.6,1163.2)"><use href="#sq" fill="#5865f2"/>
<path d="M -14,-9 C -10,-12 -6,-13 -4,-13 L -3,-11 C 1,-11.5 3,-11.5 3,-11 L 4,-13 C 6,-13 10,-12 14,-9 C 17,-3 18,4 17,10 C 13,13 10,14 8,14 L 6,11 C 8,10 9,9 10,8.5 C 4,11 -4,11 -10,8.5 C -9,9 -8,10 -6,11 L -8,14 C -10,14 -13,13 -17,10 C -18,4 -17,-3 -14,-9 Z" fill="#f4f4f4"/>
<ellipse cx="-5.5" cy="1.5" rx="3" ry="3.4" fill="#5865f2"/><ellipse cx="5.5" cy="1.5" rx="3" ry="3.4" fill="#5865f2"/></g>
<g transform="translate(1000.6,1163.2)"><use href="#sq" fill="#e8e8e8"/>
<circle r="17.5" fill="#db3a2f"/>
<path d="M 0,0 L -15.2,-8.7 A 17.5,17.5 0 0 0 -8.7,15.2 Z" fill="#1e9a45"/>
<path d="M 0,0 L 15.2,-8.7 A 17.5,17.5 0 0 1 -8.7,15.2 Z" fill="#f6c02a"/>
<circle r="8" fill="#fff"/><circle r="6.3" fill="#2a75e0"/></g>
<g transform="translate(1079.8,1163.2)"><use href="#sq" fill="url(#krg)"/>
<path d="M -20,-16 C -10,-8 0,0 8,6 L 4,10 C -4,2 -14,-8 -20,-16 Z" fill="#3a3a3a"/>
<path d="M 6,5 C 12,5 15,9 13,16 C 10,20 6,20 4,18 C 8,15 4,10 6,5 Z" fill="#2a2a2a"/></g>
<g transform="translate(1158.8,1163.2)"><use href="#sq" fill="url(#rsg)"/>
<ellipse cx="-7" cy="-3" rx="8" ry="10" fill="#b8b8b8"/><ellipse cx="7" cy="-3" rx="8" ry="10" fill="#c8c8c8"/>
<text x="-12" y="3" font-family="Liberation Serif" font-weight="bold" font-size="13" fill="#111">R</text><text x="3" y="3" font-family="Liberation Serif" font-weight="bold" font-size="13" fill="#111">S</text>
<path d="M -17,8 Q 0,3 17,8 L 16,14 Q 0,9 -16,14 Z" fill="#b22a18"/></g>
<g transform="translate(1237.8,1163.2)"><use href="#sq" fill="#0d1421"/>
<path d="M 0,10 C -6,5 -12,0 -12,-5 C -12,-10 -8,-12 -5,-12 C -2,-12 0,-10 0,-8 C 0,-10 2,-12 5,-12 C 8,-12 12,-10 12,-5 C 12,0 6,5 0,10 Z" fill="#d42222"/></g>

</svg>
<div class="a txt" style="left:1727px;top:680.9px;font-size:16px;color:#dcdcdc">Paint Layer 10</div>
<div class="a txt" style="left:1727px;top:721.5px;font-size:16px;color:#dcdcdc">Paint Layer 11</div>
<div class="a txt" style="left:1727px;top:761.9px;font-size:16px;color:#dcdcdc">Paint Layer 4</div>
<div class="a txt" style="left:1727px;top:802.5px;font-size:16px;color:#dcdcdc">Paint Layer 3</div>
<div class="a txt" style="left:1727px;top:842.9px;font-size:16px;color:#dcdcdc">Paint Layer 1</div>
<div class="a txt" style="left:1727px;top:883.5px;font-size:16px;color:#dcdcdc">Paint Layer 12</div>
<div class="a txt" style="left:1727px;top:923.9px;font-size:16px;color:#8e8e8e">Paint Layer 7</div>
<div class="a txt" style="left:1727px;top:964.5px;font-size:16px;color:#8e8e8e">Paint Layer 8</div>
<div class="a txt" style="left:1727px;top:1004.9px;font-size:16px;color:#dcdcdc">Background</div>
</body></html>
